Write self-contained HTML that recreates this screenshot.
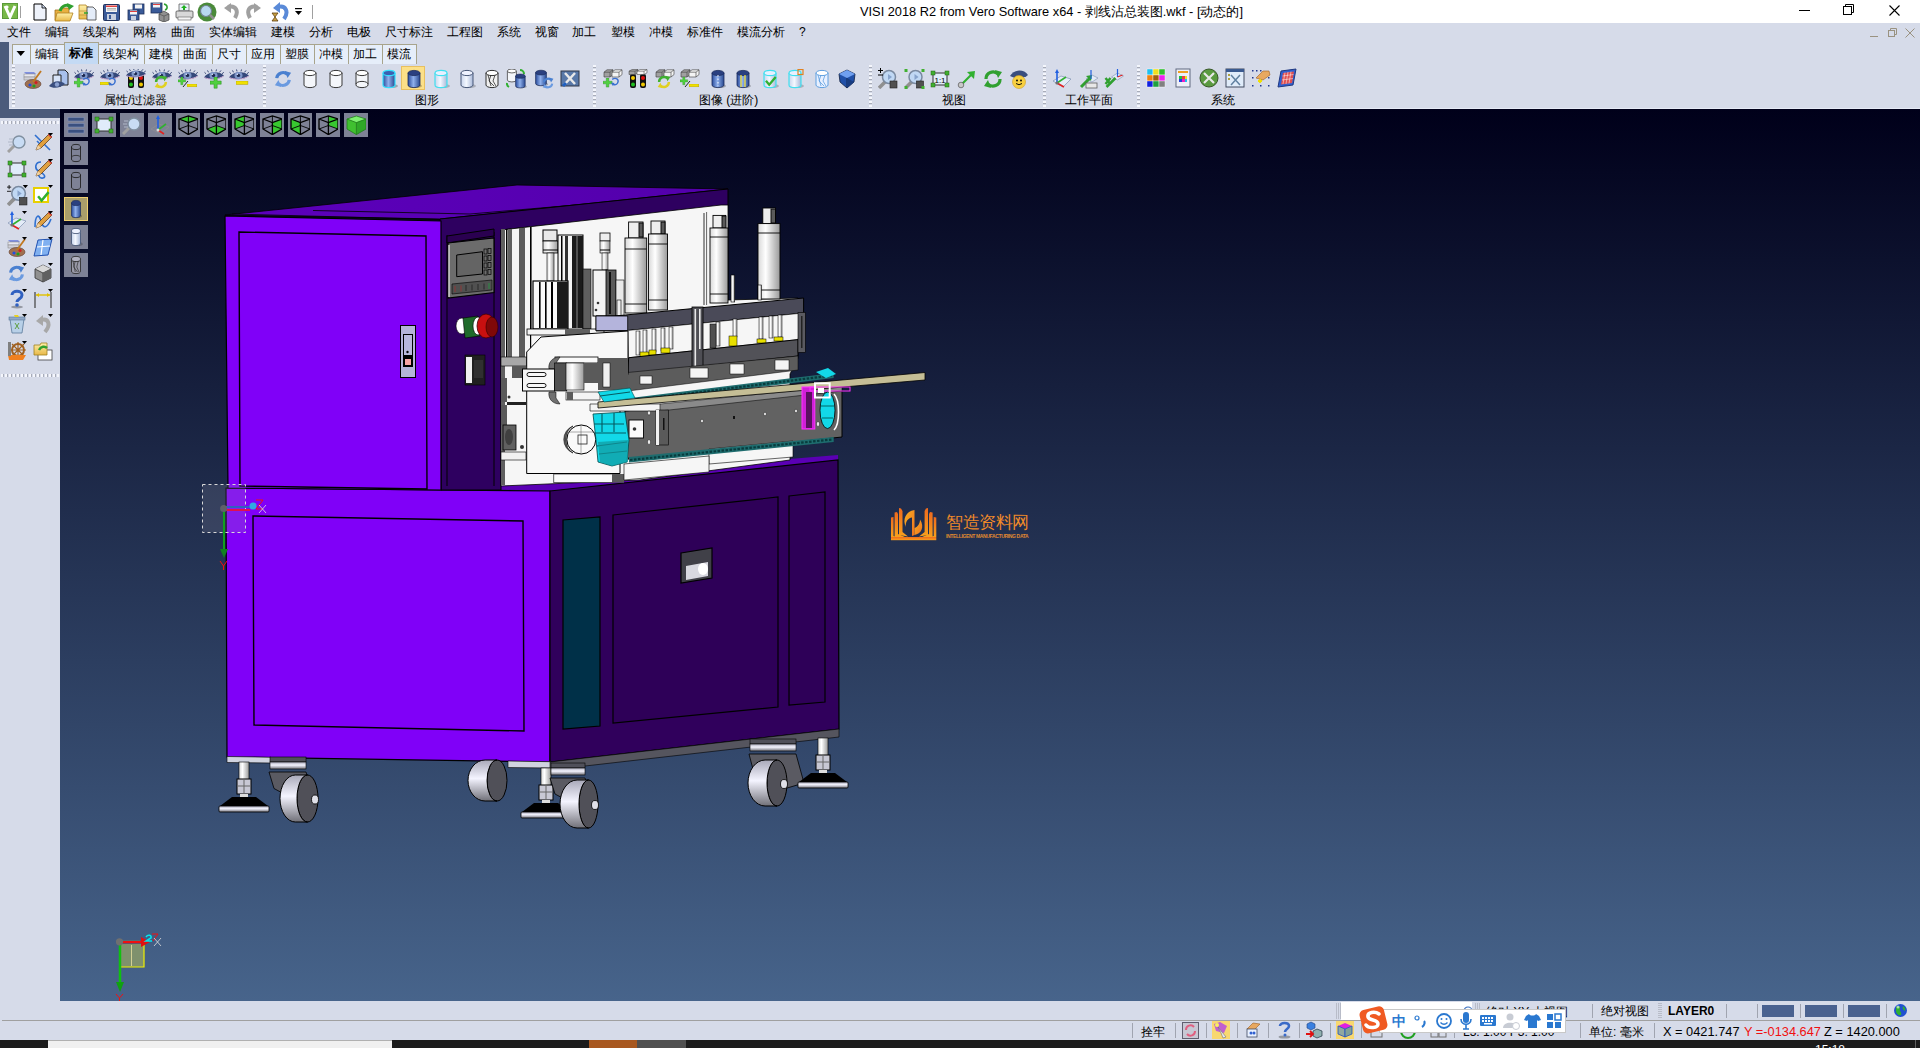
<!DOCTYPE html>
<html><head><meta charset="utf-8">
<style>
*{margin:0;padding:0;box-sizing:border-box}
html,body{width:1920px;height:1048px;overflow:hidden;background:#d6dbe9;font-family:"Liberation Sans",sans-serif;font-size:12px;color:#000}
.a{position:absolute}
.t{position:absolute;white-space:nowrap;line-height:14px}
#title{left:0;top:0;width:1920px;height:23px;background:#fff}
#vp{left:60px;top:109px;width:1860px;height:892px;background:linear-gradient(#00001a,#47648b)}
</style></head><body>
<div class="a" style="left:0;top:42px;width:9px;height:76px;background:#4b5b7b"></div>
<div class="a" style="left:0;top:109px;width:60px;height:9px;background:#4b5b7b"></div>
<div class="a" style="left:9px;top:108px;width:1911px;height:1px;background:#e6eaf6"></div>
<div id="vp" class="a"></div>
<div class="a" style="left:2px;top:1020px;width:1918px;height:1px;background:#a0a0a0"></div>
<div class="a" style="left:0;top:1040px;width:1920px;height:8px;background:#1c1c1c"></div>
<div class="a" style="left:48px;top:1040px;width:344px;height:8px;background:#f0f0f0;border-top:1px solid #b0b0b0"></div>
<div class="a" style="left:589px;top:1040px;width:48px;height:8px;background:#a85820"></div>
<div class="a" style="left:637px;top:1040px;width:49px;height:8px;background:#505050"></div>
<svg class="a" style="left:0;top:0" width="1920" height="1048" viewBox="0 0 1920 1048">
<defs>
<clipPath id="vpc"><rect x="60" y="109" width="1860" height="892"/></clipPath>
<linearGradient id="whl" x1="0" x2="0" y1="0" y2="1"><stop offset="0" stop-color="#a8a8b8"/><stop offset="0.45" stop-color="#f4f4ff"/><stop offset="1" stop-color="#707078"/></linearGradient>
<linearGradient id="cyl" x1="0" x2="1" y1="0" y2="0"><stop offset="0" stop-color="#d8d8d8"/><stop offset="0.35" stop-color="#ffffff"/><stop offset="1" stop-color="#9a9a9a"/></linearGradient>
<linearGradient id="topf" x1="0" x2="1" y1="0" y2="0"><stop offset="0" stop-color="#5c00bc"/><stop offset="0.5" stop-color="#5800b4"/><stop offset="1" stop-color="#5200aa"/></linearGradient>
<g id="foot">
 <rect x="-5" y="0" width="10" height="18" fill="url(#cyl)" stroke="#000" stroke-width="0.6"/>
 <rect x="-7" y="17" width="14" height="15" fill="#c8c8d4" stroke="#000" stroke-width="1"/>
 <line x1="0" y1="17" x2="0" y2="32" stroke="#666" stroke-width="1"/>
 <line x1="-7" y1="24" x2="7" y2="24" stroke="#666" stroke-width="1"/>
 <rect x="-4" y="32" width="8" height="3" fill="#ddd"/>
 <polygon points="-24,44 -12,35 12,35 24,44" fill="#000"/>
 <rect x="-25" y="44" width="50" height="6" rx="1" fill="url(#whl)" stroke="#000" stroke-width="0.8"/>
</g>

</defs>
<g clip-path="url(#vpc)">
<!-- lower cabinet -->
<polygon points="441,482 560,478 838,455 838,460 550,491 441,488" fill="#5a00b4"/>
<polygon points="226,488 550,491 550,762 227,757" fill="#8000f8" stroke="#000" stroke-width="1.2"/>
<polygon points="253,516 523,521 524,731 254,725" fill="#8000f8" stroke="#000" stroke-width="1.4"/>
<polygon points="550,491 838,460 839,729 550,762" fill="#30005c" stroke="#000" stroke-width="1.2"/>
<polygon points="563,520 600,517 600,726 563,729" fill="#003048" stroke="#000" stroke-width="1.2"/>
<polygon points="613,515 778,497 778,707 613,723" fill="#2e0058" stroke="#000" stroke-width="1.2"/>
<polygon points="789,496 825,492 825,702 789,705" fill="#2e0058" stroke="#000" stroke-width="1.2"/>
<polygon points="681,553 712,548 712,578 681,583" fill="#404048" stroke="#000" stroke-width="1.2"/>
<path d="M686,566 L708,562 L708,576 L686,580 Z" fill="#d8d8e0"/>
<ellipse cx="703" cy="569" rx="5" ry="6" fill="#fff"/>
<polygon points="227,756.5 271,757.2 271,763 227,762.5" fill="#d0d3e0" stroke="#000" stroke-width="0.6"/>
<polygon points="508,761 551,761.7 551,768 508,767.5" fill="#d0d3e0" stroke="#000" stroke-width="0.6"/>
<polygon points="550,762 839,729 839,737 550,770" fill="#55555e" stroke="#000" stroke-width="0.6"/>
<!-- upper cabinet -->
<polygon points="225,215 517,185 728,189 440,219" fill="url(#topf)" stroke="#000" stroke-width="0.8"/>
<path d="M232,214 L440,219.5 M313,210.5 L470,214 L728,192" stroke="#000" stroke-width="1" fill="none" opacity="0.8"/>
<polygon points="440,219 728,189 728,206 501,230 501,490 441,490" fill="#2e0060" stroke="#000" stroke-width="1"/>
<polygon points="225,216 441,221 441,490 228,488" fill="#8000f8" stroke="#000" stroke-width="1.2"/>
<polygon points="239,232 426,236 427,489 240,486" fill="#8000f8" stroke="#000" stroke-width="1.4"/>
<rect x="400.5" y="325.5" width="15" height="52" fill="#b4b4d8" stroke="#000" stroke-width="1"/>
<rect x="403.5" y="334.5" width="9" height="32" fill="#b8b8dc" stroke="#000" stroke-width="1"/>
<rect x="404" y="355" width="8" height="11" fill="#000"/>
<rect x="405" y="359" width="6" height="6" fill="#f8a4a4"/>
<circle cx="407.5" cy="352" r="1.2" fill="#000"/>
<!-- side panel details -->
<line x1="447" y1="235" x2="447" y2="486" stroke="#000" stroke-width="1"/>
<line x1="494" y1="232" x2="494" y2="486" stroke="#000" stroke-width="1"/>
<polygon points="447,236 494,229 494,236 447,243" fill="#2a0050" stroke="#000" stroke-width="1"/>
<polygon points="448,243 494,238 494,292.5 448,298" fill="#6c6c6c" stroke="#000" stroke-width="1.2"/>
<line x1="449" y1="245" x2="449" y2="297" stroke="#f0f0f0" stroke-width="1.2"/>
<polygon points="456.7,255 482.5,251.7 482.5,274 456.7,276.7" fill="#646464" stroke="#000" stroke-width="1"/>
<g fill="none" stroke="#000" stroke-width="0.7"><rect x="484" y="249" width="3" height="5"/><rect x="488" y="248.5" width="3" height="5"/><rect x="484" y="256" width="3" height="5"/><rect x="488" y="255.5" width="3" height="5"/><rect x="484" y="263" width="3" height="5"/><rect x="488" y="262.5" width="3" height="5"/><rect x="484" y="270" width="3" height="5"/><rect x="488" y="269.5" width="3" height="5"/></g>
<polygon points="452,284 492,280 492,290 452,294" fill="#505050" stroke="#000" stroke-width="0.6"/>
<g fill="none" stroke-width="0.8"><path d="M455,286 v6 M461,285.5 v6" stroke="#a03030"/><path d="M466,285 v6 M472,284.5 v6 M478,284 v6 M484,283.5 v6" stroke="#202020"/><path d="M489,283 v6" stroke="#20a040"/></g>
<ellipse cx="462" cy="326" rx="6" ry="8" fill="#fff" stroke="#000" stroke-width="0.6"/>
<polygon points="463,318 478,316 480,336 465,338" fill="#1e6a2a" stroke="#000" stroke-width="0.6"/>
<ellipse cx="478" cy="326" rx="5" ry="9" fill="#fff" stroke="#000" stroke-width="0.6"/>
<ellipse cx="486" cy="326" rx="9" ry="12" fill="#c81010" stroke="#400" stroke-width="0.8"/>
<ellipse cx="492" cy="327" rx="6" ry="10" fill="#800808" stroke="#300" stroke-width="0.6"/>
<rect x="465" y="355" width="20" height="30" fill="#202020" stroke="#000" stroke-width="0.6"/>
<rect x="466" y="357" width="6" height="26" fill="#f0f0f0"/>
<rect x="474" y="360" width="9" height="18" fill="#303030"/>

<!-- mechanism -->
<polygon points="501,230 721,205 728,205 728,300 798,298 798,358 790,374 790,460 640,480 501,486" fill="#f6f6f6" stroke="#000" stroke-width="0.8"/>
<polyline points="704,213 704,305" stroke="#000" stroke-width="0.8" fill="none"/>
<polyline points="706.6,212 706.6,305" stroke="#000" stroke-width="0.6" fill="none"/>
<polyline points="531,227 531,330" stroke="#000" stroke-width="1" fill="none"/>
<!-- vertical profile -->
<rect x="501" y="229" width="4" height="256" fill="#606060"/>
<rect x="506" y="229" width="1.5" height="128" fill="#000"/>
<rect x="508" y="229" width="4" height="128" fill="#606060"/>
<rect x="519" y="228" width="6" height="129" fill="#5c5c5c"/>
<rect x="530" y="227" width="1.2" height="130" fill="#000"/>
<rect x="501" y="357" width="26" height="9" fill="#a8a8a8" stroke="#000" stroke-width="0.6"/>
<rect x="512" y="366" width="14" height="12" fill="#5a5a5a"/>
<rect x="501" y="378" width="6" height="24" fill="#5a5a5a"/>
<rect x="507" y="402" width="19" height="3" fill="#222"/>
<rect x="501" y="405" width="6" height="20" fill="#5a5a5a"/>
<rect x="503" y="425" width="13" height="25" fill="#606060" stroke="#000" stroke-width="0.8"/>
<ellipse cx="509" cy="437" rx="4" ry="8" fill="#404040"/>
<rect x="501" y="452" width="25" height="8" fill="#f0f0f0" stroke="#000" stroke-width="0.6"/>
<circle cx="522" cy="447" r="2" fill="#333"/>
<circle cx="509" cy="397" r="1.5" fill="#333"/>
<!-- cylinder 1 small -->
<rect x="543" y="230" width="14" height="11" fill="#e8e8e8" stroke="#000" stroke-width="1"/>
<rect x="543" y="241" width="15" height="12" fill="url(#cyl)" stroke="#000" stroke-width="0.8"/>
<line x1="543" y1="250" x2="558" y2="250" stroke="#000" stroke-width="1"/>
<rect x="547" y="253" width="7" height="28" fill="url(#cyl)" stroke="#000" stroke-width="0.6"/>
<!-- striped column -->
<rect x="558" y="235" width="25" height="95" fill="#f4f4f4" stroke="#000" stroke-width="1"/>
<rect x="561" y="236" width="1.5" height="92" fill="#000"/>
<rect x="565" y="236" width="3" height="92" fill="#303030"/>
<rect x="572" y="236" width="11" height="92" fill="#1a1a1a"/>
<rect x="576" y="236" width="2" height="92" fill="#505050"/>
<rect x="583" y="269" width="8" height="60" fill="#5e5e5e" stroke="#000" stroke-width="0.6"/>
<rect x="533" y="281" width="35" height="48" fill="#fafafa" stroke="#000" stroke-width="1.2"/>
<rect x="539" y="282" width="1.6" height="46" fill="#000"/>
<rect x="545" y="282" width="1.6" height="46" fill="#000"/>
<rect x="551" y="282" width="2" height="46" fill="#000"/>
<rect x="557" y="282" width="11" height="46" fill="#1a1a1a"/>
<rect x="527" y="329" width="77" height="6" fill="#f4f4f4" stroke="#000" stroke-width="0.8"/>
<rect x="565" y="329" width="25" height="6" fill="#606060"/>
<!-- small cylinder 2 -->
<rect x="600" y="233" width="10" height="8" fill="#eee" stroke="#000" stroke-width="0.8"/>
<rect x="600" y="241" width="10" height="12" fill="url(#cyl)" stroke="#000" stroke-width="0.6"/>
<line x1="600" y1="250" x2="610" y2="250" stroke="#000" stroke-width="1"/>
<rect x="602" y="253" width="6" height="17" fill="url(#cyl)" stroke="#000" stroke-width="0.5"/>
<!-- block -->
<rect x="593" y="270" width="14" height="46" fill="#f4f4f4" stroke="#000" stroke-width="1"/>
<rect x="606" y="270" width="10" height="46" fill="#5a5a5a" stroke="#000" stroke-width="0.8"/>
<rect x="609" y="272" width="2" height="42" fill="#111"/>
<circle cx="598" cy="303" r="1.3" fill="#333"/><circle cx="596" cy="310" r="1.3" fill="#333"/>
<rect x="616" y="280" width="8" height="36" fill="#e8e8e8" stroke="#000" stroke-width="0.6"/>
<!-- big cylinders -->
<g stroke="#000" stroke-width="0.9">
<rect x="628.6" y="222" width="14.4" height="16" fill="#eeeeee"/><rect x="639" y="223" width="4" height="14" fill="#5a5a5a"/>
<rect x="625" y="238" width="21.7" height="75" fill="url(#cyl)"/>
<line x1="625" y1="249" x2="646.7" y2="249"/><line x1="625" y1="304" x2="646.7" y2="304"/>
<rect x="651" y="221" width="14" height="13" fill="#eeeeee"/><rect x="661" y="222" width="4" height="12" fill="#5a5a5a"/>
<rect x="648.5" y="234" width="19" height="76" fill="url(#cyl)"/>
<line x1="648.5" y1="244" x2="667.5" y2="244"/><line x1="648.5" y1="300" x2="667.5" y2="300"/>
<rect x="713" y="215.4" width="12.6" height="12.6" fill="#eeeeee"/><rect x="722" y="216" width="4" height="12" fill="#5a5a5a"/>
<rect x="710" y="228" width="18" height="75" fill="url(#cyl)"/>
<line x1="710" y1="237" x2="728" y2="237"/><line x1="710" y1="294" x2="728" y2="294"/>
<rect x="762.8" y="208" width="12.7" height="15.6" fill="#eeeeee"/><rect x="771" y="209" width="4.5" height="14" fill="#5a5a5a"/>
<rect x="758" y="223.6" width="22" height="75.4" fill="url(#cyl)"/>
<line x1="758" y1="233" x2="780" y2="233"/><line x1="758" y1="290" x2="780" y2="290"/>
<rect x="731" y="275" width="3.7" height="27" fill="url(#cyl)" stroke-width="0.6"/>
<rect x="758" y="285" width="3.5" height="15" fill="url(#cyl)" stroke-width="0.6"/>
<rect x="617" y="300" width="4" height="16" fill="#eee" stroke-width="0.6"/>
</g>
<!-- top beam -->
<polygon points="596,316 628,316 628,331 596,331" fill="#b4b4dc" stroke="#000" stroke-width="0.8"/>
<polygon points="615,316 803.6,298 803.6,313 627.7,330.5 615,330.5" fill="#4a4a58" stroke="#000" stroke-width="1"/>
<polygon points="596,316 627.7,316 627.7,330.5 596,330.5" fill="#b4b4dc" stroke="#000" stroke-width="0.8"/>
<!-- between beams -->
<polygon points="627.7,330.5 803.6,313 798,339.6 628.6,357.75" fill="#f6f6f6" stroke="#000" stroke-width="0.5"/>
<g fill="url(#cyl)" stroke="#000" stroke-width="0.5">
<rect x="636" y="331" width="4" height="24"/><rect x="643" y="330" width="4" height="24"/><rect x="652" y="329" width="4" height="23"/><rect x="661" y="328" width="4" height="23"/><rect x="669" y="327" width="4" height="22"/>
<rect x="716" y="322" width="4" height="24"/><rect x="733" y="319" width="4" height="18"/><rect x="759" y="317" width="4" height="22"/><rect x="769" y="316" width="4" height="22"/><rect x="778" y="315" width="4" height="22"/>
</g>
<rect x="710" y="324" width="6" height="24" fill="#505050" stroke="#000" stroke-width="0.5"/>
<g fill="#e8e000" stroke="#000" stroke-width="0.5">
<rect x="640" y="352" width="9" height="5"/><rect x="649" y="350" width="7" height="5"/><rect x="661" y="348" width="9" height="5"/>
<rect x="729" y="336" width="8" height="10"/><rect x="757" y="339" width="9" height="4"/><rect x="774" y="337" width="9" height="4"/>
</g>
<!-- lower beam -->
<polygon points="628.6,357.75 798,339.6 798,356 628,374" fill="#525258" stroke="#000" stroke-width="1"/>
<rect x="692" y="307" width="11" height="62.5" fill="#4e4e54" stroke="#000" stroke-width="0.8"/>
<rect x="694.5" y="309" width="1.6" height="58" fill="#e8e8e8"/><rect x="699" y="309" width="1.6" height="40" fill="#e8e8e8"/>
<rect x="798" y="312.4" width="7.4" height="40" fill="#5a5a60" stroke="#000" stroke-width="0.6"/>
<rect x="801" y="316" width="1.5" height="32" fill="#222"/>
<!-- below lower beam -->
<polygon points="612,374 798,356 798,370 620,392" fill="#5c5c5c" stroke="#000" stroke-width="0.5"/>
<g fill="#f4f4f4" stroke="#000" stroke-width="0.5"><rect x="690" y="368" width="18" height="10"/><rect x="730" y="364" width="14" height="10"/><rect x="775" y="360" width="14" height="10"/><rect x="640" y="376" width="12" height="8"/></g>
<!-- white bracket area -->
<polygon points="526.7,352 541,337 628,331 628,374 620,392 620,473.5 526.7,473.5" fill="#f8f8f8" stroke="#000" stroke-width="1"/>
<rect x="555" y="357" width="43" height="6" fill="#fafafa" stroke="#000" stroke-width="0.8"/>
<rect x="598" y="358" width="30" height="32" fill="#5a5a5a"/>
<rect x="603" y="363" width="7" height="24" fill="#f0f0f0" stroke="#000" stroke-width="0.5"/>
<path d="M560,357 C551,357 548,364 549,369 L556,369 L556,363 Z" fill="#707070" stroke="#000" stroke-width="0.5"/>
<path d="M560,404 C551,404 548,397 549,392 L556,392 L556,398 Z" fill="#707070" stroke="#000" stroke-width="0.5"/>
<rect x="522.5" y="369" width="32" height="22" fill="#f6f6f6" stroke="#000" stroke-width="1"/>
<rect x="527" y="372.5" width="19" height="4" rx="2" fill="none" stroke="#000" stroke-width="0.9"/>
<rect x="527" y="383.5" width="19" height="4" rx="2" fill="none" stroke="#000" stroke-width="0.9"/>
<rect x="554.5" y="363" width="12.3" height="28" fill="#505050" stroke="#000" stroke-width="0.6"/>
<rect x="566" y="363" width="18" height="27" fill="url(#cyl)" stroke="#000" stroke-width="0.6"/>
<rect x="584" y="363" width="14" height="20" fill="#5a5a5a"/>
<rect x="566" y="392" width="34" height="8" fill="#f4f4f4" stroke="#000" stroke-width="0.6"/>
<rect x="567" y="392" width="6" height="8" fill="#5a5a5a"/>
<circle cx="581.3" cy="439.5" r="14.5" fill="#fafafa" stroke="#000" stroke-width="1"/>
<path d="M573,426 A14.5,14.5 0 0 0 573,453 A11,14.5 0 0 1 573,426Z" fill="#606060" stroke="#000" stroke-width="0.6"/>
<path d="M581,425 V454 M568,432 L594,432" stroke="#555" stroke-width="0.5"/>
<rect x="578" y="435" width="9" height="9" fill="none" stroke="#222" stroke-width="0.8"/>
<rect x="553.8" y="474" width="58.7" height="8.7" fill="#fafafa" stroke="#000" stroke-width="0.6"/>
<rect x="612" y="474" width="12" height="8.7" fill="#5a5a5a"/>
<!-- conveyor -->
<polygon points="625,411 842,390.7 842,437 629,459.8 621,444" fill="#626262" stroke="#000" stroke-width="1"/>
<polygon points="709,449 793,441 793,457 709,464" fill="#f6f6f6" stroke="#000" stroke-width="0.6"/>
<polygon points="624,464 709,456 709,472 624,480" fill="#f6f6f6" stroke="#000" stroke-width="0.6"/>
<polygon points="590,404 660.4,404 660.4,411 590,411" fill="#f4f4f4" stroke="#000" stroke-width="0.6"/>
<polygon points="660,404 842,386 842,391 660,411" fill="#8a8a8a" stroke="#000" stroke-width="0.5"/>
<polygon points="634.7,397.5 833.7,373 833.7,378 634.7,402.5" fill="#1e6c6e"/>
<polyline points="636,400 832,375.5" stroke="#083c3e" stroke-width="2.2" stroke-dasharray="2.5,1.5" fill="none"/>
<polygon points="598,402 925,372.5 925,380 598,408" fill="#c5be96" stroke="#000" stroke-width="0.8"/>
<polygon points="629,457 833.7,437 833.7,442 629,462.5" fill="#1e6c6e"/>
<polyline points="630,460 832,439.5" stroke="#083c3e" stroke-width="2.2" stroke-dasharray="2.5,1.5" fill="none"/>
<rect x="629" y="420" width="14.5" height="18" fill="#fafafa" stroke="#000" stroke-width="0.9"/>
<circle cx="634.5" cy="429" r="1.8" fill="#333"/>
<rect x="656" y="410" width="12.5" height="35" fill="#5a5a5a" stroke="#000" stroke-width="0.6"/>
<rect x="656" y="410" width="3" height="35" fill="#f0f0f0"/>
<rect x="663" y="418" width="1.5" height="12" fill="#111"/>
<g fill="#f4f4f4" stroke="#000" stroke-width="0.4"><ellipse cx="649" cy="413" rx="1.5" ry="2"/><ellipse cx="649" cy="442" rx="1.5" ry="2.5"/><ellipse cx="702" cy="421" rx="1.3" ry="1.8"/><ellipse cx="765" cy="414" rx="1.3" ry="1.8"/><ellipse cx="796" cy="411" rx="1.3" ry="1.8"/><ellipse cx="818" cy="424" rx="1.5" ry="2.5"/></g>
<rect x="733" y="416" width="2" height="3" fill="#111"/>
<!-- cyan gear left -->
<polygon points="593,414 625,412 629,440 627,462 612,466 598,462 596,440" fill="#12d8e8" stroke="#044" stroke-width="0.8"/>
<g stroke="#055a60" stroke-width="1.1" fill="none"><path d="M594,424 H624 M594,433 H626 M597,446 L627,442 M599,454 L627,451 M602,414 V432 M614,413 V432"/></g>
<polygon points="598,442 628,440 628,462 612,466 600,462" fill="#119aa0" opacity="0.7"/>
<polygon points="598,392 630,388 635,398 604,402" fill="#12d8e8" stroke="#044" stroke-width="0.6"/>
<path d="M600,396 L630,392" stroke="#055a60" stroke-width="1"/>
<polygon points="816,372 828,368 836,374 826,378" fill="#12d8e8"/>
<!-- right end -->
<path d="M834,394 C840,400 840,424 834,430" stroke="#fff" stroke-width="1.6" fill="none"/>
<ellipse cx="827.5" cy="410.3" rx="7.5" ry="18.3" fill="#12d8e8" stroke="#000" stroke-width="0.8"/>
<path d="M821,406 H834 M822,418 H833" stroke="#066" stroke-width="1"/>
<rect x="802" y="387" width="12.8" height="42" fill="#d020d8" stroke="#ff30ff" stroke-width="1"/>
<rect x="806" y="392" width="6" height="36" fill="#5a1060"/>
<rect x="810" y="387" width="40" height="4" fill="none" stroke="#ff30ff" stroke-width="1"/>
<rect x="815" y="383.3" width="14.7" height="14.2" fill="none" stroke="#fff" stroke-width="2"/>
<rect x="818" y="388" width="6" height="5" fill="#fff"/>

<!-- feet & casters -->
<ellipse cx="497" cy="780.5" rx="10" ry="20.5" fill="#505058" stroke="#000" stroke-width="1"/><path d="M485.1,760.0 L497,760.0 A10,20.5 0 0 0 497,801.0 L485.1,801.0 A17.1,20.5 0 0 1 485.1,760.0 Z" fill="url(#whl)" stroke="#000" stroke-width="1"/>
<use href="#foot" x="546" y="768"/>
<use href="#foot" x="244" y="762"/>
<rect x="270" y="757" width="36" height="5" fill="#50505a" stroke="#000" stroke-width="0.6"/><rect x="270" y="762" width="36" height="7" fill="url(#whl)" stroke="#000" stroke-width="0.6"/><path d="M269,772 L306,772 L314,798.5 L307.5,806.5 L274,788.5 Z" fill="#5a5a62" stroke="#000" stroke-width="0.8"/><ellipse cx="307.5" cy="798.5" rx="10.5" ry="23.5" fill="#505058" stroke="#000" stroke-width="1"/><path d="M295.3,775.0 L307.5,775.0 A10.5,23.5 0 0 0 307.5,822.0 L295.3,822.0 A15.3,23.5 0 0 1 295.3,775.0 Z" fill="url(#whl)" stroke="#000" stroke-width="1"/><ellipse cx="315.0" cy="799.5" rx="3.5" ry="4.5" fill="#e0e0e8" stroke="#000" stroke-width="0.8"/>
<rect x="551" y="763" width="34" height="5" fill="#50505a" stroke="#000" stroke-width="0.6"/><rect x="551" y="768" width="34" height="7" fill="url(#whl)" stroke="#000" stroke-width="0.6"/><path d="M550,778 L585,778 L593,804 L588.5,812 L555,794 Z" fill="#5a5a62" stroke="#000" stroke-width="0.8"/><ellipse cx="588.5" cy="804" rx="9.5" ry="24" fill="#505058" stroke="#000" stroke-width="1"/><path d="M577.1,780 L588.5,780 A9.5,24 0 0 0 588.5,828 L577.1,828 A17.1,24 0 0 1 577.1,780 Z" fill="url(#whl)" stroke="#000" stroke-width="1"/><ellipse cx="595.0" cy="805" rx="3.5" ry="4.5" fill="#e0e0e8" stroke="#000" stroke-width="0.8"/>
<rect x="750" y="739" width="46" height="5" fill="#50505a" stroke="#000" stroke-width="0.6"/><rect x="750" y="744" width="46" height="7" fill="url(#whl)" stroke="#000" stroke-width="0.6"/><path d="M749,754 L796,754 L804,783 L777,791 L754,773 Z" fill="#5a5a62" stroke="#000" stroke-width="0.8"/><ellipse cx="777" cy="783" rx="10" ry="23" fill="#505058" stroke="#000" stroke-width="1"/><path d="M765.1,760 L777,760 A10,23 0 0 0 777,806 L765.1,806 A17.1,23 0 0 1 765.1,760 Z" fill="url(#whl)" stroke="#000" stroke-width="1"/><ellipse cx="784" cy="784" rx="3.5" ry="4.5" fill="#e0e0e8" stroke="#000" stroke-width="0.8"/>
<use href="#foot" x="823" y="738"/>
</g>
</svg>

<svg width="0" height="0" style="position:absolute">
<defs>
<linearGradient id="gb" x1="0" x2="1"><stop offset="0" stop-color="#2a4c9c"/><stop offset="0.45" stop-color="#8fb0ec"/><stop offset="1" stop-color="#284890"/></linearGradient>
<linearGradient id="gl" x1="0" x2="1"><stop offset="0" stop-color="#c8d4ec"/><stop offset="0.45" stop-color="#f4f8ff"/><stop offset="1" stop-color="#a8b8d8"/></linearGradient>
<linearGradient id="gw" x1="0" x2="1"><stop offset="0" stop-color="#e4e4e4"/><stop offset="0.5" stop-color="#ffffff"/><stop offset="1" stop-color="#cfcfcf"/></linearGradient>
<linearGradient id="gg" x1="0" x2="0" y1="0" y2="1"><stop offset="0" stop-color="#9be070"/><stop offset="1" stop-color="#2c9a1c"/></linearGradient>
<linearGradient id="gy" x1="0" x2="0" y1="0" y2="1"><stop offset="0" stop-color="#fff060"/><stop offset="1" stop-color="#d0a800"/></linearGradient>
<linearGradient id="gfold" x1="0" x2="0" y1="0" y2="1"><stop offset="0" stop-color="#fff0a8"/><stop offset="1" stop-color="#e8b848"/></linearGradient>
<symbol id="eye" viewBox="0 0 20 20"><path d="M0,9 C3,3 15,1 20,7 C16,11 5,12 0,9Z" fill="#34487a"/><path d="M0.5,9 C5,11.5 15,11 19.5,7.5" stroke="#d0a8d0" stroke-width="1" fill="none"/><ellipse cx="9.5" cy="6.8" rx="4" ry="3.6" fill="#7e96c8"/><circle cx="9.5" cy="6.8" r="1.7" fill="#1c2850"/><circle cx="8.3" cy="5.6" r="0.8" fill="#e0e8ff"/><path d="M2,5 L0.5,3.5 M4.5,3.5 L3.5,1.5 M8,2.5 L7.5,0.5 M12,2.5 L12.5,0.5 M15.5,3.5 L17,1.5 M18,5 L19.8,3.5" stroke="#283868" stroke-width="0.9"/></symbol>
<symbol id="plus" viewBox="0 0 20 20"><path d="M5,0 H9 V5 H14 V9 H9 V14 H5 V9 H0 V5 H5Z" fill="#50d040" stroke="#2a8a20" stroke-width="0.6"/></symbol>
<symbol id="minus" viewBox="0 0 20 20"><rect x="0" y="0" width="14" height="4" fill="#f0e000" stroke="#b0a000" stroke-width="0.6"/></symbol>
<symbol id="barrow" viewBox="0 0 20 20"><path d="M2,4 C8,0 14,4 11,10 C9,14 4,13 3,12" stroke="#3a70d0" stroke-width="2.4" fill="none"/><path d="M0,9 L6,10 L3,15Z" fill="#3a70d0"/></symbol>
<symbol id="cylo" viewBox="0 0 20 20"><path d="M4,4 V16 A6,2.6 0 0 0 16,16 V4" fill="#f4f6fa" stroke="#383838" stroke-width="1"/><ellipse cx="10" cy="4" rx="6" ry="2.6" fill="#ffffff" stroke="#383838" stroke-width="1"/></symbol>
<symbol id="cylo2" viewBox="0 0 20 20"><path d="M4,4 V16 A6,2.6 0 0 0 16,16 V4" fill="#f4f6fa" stroke="#383838" stroke-width="1"/><ellipse cx="10" cy="4" rx="6" ry="2.6" fill="#ffffff" stroke="#383838" stroke-width="1"/><path d="M4,15 A6,2.6 0 0 1 16,15" stroke="#383838" fill="none"/></symbol>
<symbol id="cylb" viewBox="0 0 20 20"><ellipse cx="11" cy="17" rx="7" ry="2" fill="#000" opacity="0.25"/><path d="M4,4 V16 A6,2.6 0 0 0 16,16 V4" fill="url(#gb)" stroke="#1c2c5c" stroke-width="0.8"/><ellipse cx="10" cy="4" rx="6" ry="2.6" fill="#2a4080" stroke="#1c2c5c" stroke-width="0.8"/></symbol>
<symbol id="cylbc" viewBox="0 0 20 20"><ellipse cx="12" cy="17" rx="7" ry="2" fill="#000" opacity="0.25"/><path d="M4,4 V16 A6,2.6 0 0 0 16,16 V4" fill="url(#gb)" stroke="#30e0ff" stroke-width="1.2"/><ellipse cx="10" cy="4" rx="6" ry="2.6" fill="#3a60b0" stroke="#30e0ff" stroke-width="1.2"/></symbol>
<symbol id="cylc" viewBox="0 0 20 20"><ellipse cx="12" cy="17" rx="7" ry="2" fill="#000" opacity="0.2"/><path d="M4,4 V16 A6,2.6 0 0 0 16,16 V4" fill="url(#gl)" stroke="#40e0f0" stroke-width="1.2"/><ellipse cx="10" cy="4" rx="6" ry="2.6" fill="#e8f0ff" stroke="#40e0f0" stroke-width="1.2"/></symbol>
<symbol id="cyll" viewBox="0 0 20 20"><ellipse cx="12" cy="17" rx="7" ry="2" fill="#000" opacity="0.2"/><path d="M4,4 V16 A6,2.6 0 0 0 16,16 V4" fill="url(#gl)" stroke="#485878" stroke-width="1"/><ellipse cx="10" cy="4" rx="6" ry="2.6" fill="#eef2ff" stroke="#485878" stroke-width="1"/></symbol>
<symbol id="cylw" viewBox="0 0 20 20"><path d="M4,4 V16 A6,2.6 0 0 0 16,16 V4" fill="#f0f0f0" stroke="#303030" stroke-width="1"/><ellipse cx="10" cy="4" rx="6" ry="2.6" fill="#fff" stroke="#303030" stroke-width="1"/><path d="M6,6 L9,17 M9,6 L7,12 L12,17 M13,6 L11,12 L14,17" stroke="#303030" stroke-width="0.8" fill="none"/></symbol>
<symbol id="cylwb" viewBox="0 0 20 20"><path d="M4,4 V16 A6,2.6 0 0 0 16,16 V4" fill="#e8f0ff" stroke="#60a0e0" stroke-width="1"/><ellipse cx="10" cy="4" rx="6" ry="2.6" fill="#fff" stroke="#60a0e0" stroke-width="1"/><path d="M6,6 L9,17 M9,6 L7,12 L12,17 M13,6 L11,12 L14,17" stroke="#60a0e0" stroke-width="0.8" fill="none"/></symbol>
<symbol id="refb" viewBox="0 0 20 20"><path d="M3,9 A7,7 0 0 1 15,5" stroke="#4a80d0" stroke-width="3.5" fill="none"/><path d="M12,1 L19,3 L15,9Z" fill="#4a80d0"/><path d="M17,11 A7,7 0 0 1 5,15" stroke="#6a9ae0" stroke-width="3.5" fill="none"/><path d="M8,19 L1,17 L5,11Z" fill="#6a9ae0"/></symbol>
<symbol id="refg" viewBox="0 0 20 20"><path d="M3,10 A7,7 0 0 1 15,5" stroke="#40b030" stroke-width="3.5" fill="none"/><path d="M12,1 L19,3 L15,9Z" fill="#40b030"/><path d="M17,10 A7,7 0 0 1 5,15" stroke="#e0d020" stroke-width="3.5" fill="none"/><path d="M8,19 L1,17 L5,11Z" fill="#e0d020"/></symbol>
<symbol id="refgg" viewBox="0 0 20 20"><path d="M3,10 A7,7 0 0 1 15,5" stroke="#30a030" stroke-width="3.2" fill="none"/><path d="M12,1 L19,3 L15,9Z" fill="#30a030"/><path d="M17,10 A7,7 0 0 1 5,15" stroke="#30a030" stroke-width="3.2" fill="none"/><path d="M8,19 L1,17 L5,11Z" fill="#30a030"/></symbol>
<symbol id="traffic" viewBox="0 0 20 20"><rect x="2" y="5" width="6" height="14" rx="2" fill="#111"/><rect x="12" y="5" width="6" height="14" rx="2" fill="#111"/><circle cx="5" cy="9" r="2" fill="#f0c800"/><circle cx="5" cy="15.5" r="2" fill="#20c020"/><circle cx="15" cy="9" r="2" fill="#e01010"/><circle cx="15" cy="15.5" r="2" fill="#f0c800"/></symbol>
<symbol id="cubes" viewBox="0 0 20 20"><path d="M1,4 L4,1 L10,1 L10,7 L7,10 L1,10Z" fill="#a0a0a0" stroke="#404040" stroke-width="0.7"/><path d="M1,4 H7 V10 M7,4 L10,1" stroke="#404040" stroke-width="0.7" fill="none"/><path d="M9,4 L12,1 L19,1 L19,7 L16,10 L9,10Z" fill="#f4f4f4" stroke="#404040" stroke-width="0.7"/><path d="M9,4 H16 V10 M16,4 L19,1" stroke="#404040" stroke-width="0.7" fill="none"/></symbol>
<symbol id="palette" viewBox="0 0 20 20"><path d="M1,3 L11,3 L13,5 L3,5Z" fill="#8090e0"/><rect x="1" y="5" width="11" height="3" fill="#e8e8f0" stroke="#808080" stroke-width="0.5"/><rect x="1" y="8" width="11" height="3" fill="#d0d0d8" stroke="#808080" stroke-width="0.5"/><ellipse cx="10" cy="15" rx="8" ry="4.5" fill="#a07050" stroke="#604030" stroke-width="0.6"/><circle cx="7" cy="16" r="1.6" fill="#2050e0"/><circle cx="11" cy="17" r="1.6" fill="#20a020"/><circle cx="13" cy="13.5" r="1.6" fill="#d02020"/><path d="M10,13 L18,2" stroke="#c07820" stroke-width="1.8"/></symbol>
<symbol id="docseye" viewBox="0 0 20 20"><path d="M9,1 H16 L19,4 V16 H9Z" fill="#a8c0ec" stroke="#202020" stroke-width="1"/><path d="M4,6 H12 V17 H4Z" fill="#d8e4f8" stroke="#202020" stroke-width="1"/><path d="M0,17 C4,11 12,11 16,15 C12,19 4,20 0,17Z" fill="#3a4e7e"/><circle cx="8" cy="15.5" r="2.2" fill="#8aa0d0"/></symbol>
<symbol id="tool" viewBox="0 0 20 20"><rect x="1" y="2" width="18" height="15" fill="#5878a8" stroke="#303848" stroke-width="1"/><path d="M4,16 L15,4 M5,4 L15,15" stroke="#e8e8e8" stroke-width="2.5"/><path d="M3,17 L6,14" stroke="#2060c0" stroke-width="3"/></symbol>
<symbol id="cube" viewBox="0 0 20 20"><path d="M2,5 L10,1 L18,5 L17,13 L10,19 L3,13Z" fill="#2050a8" stroke="#102040" stroke-width="0.8"/><path d="M2,5 L10,9 L18,5 L10,1Z" fill="#70a0f0"/><path d="M10,9 V19" stroke="#102040" stroke-width="0.8"/><path d="M10,9 L17,13 L10,19Z" fill="#183c80"/></symbol>
<symbol id="zoom" viewBox="0 0 20 20"><path d="M1,19 L8,12" stroke="#909090" stroke-width="3.5"/><circle cx="11" cy="8" r="6.5" fill="#c0d8f4" stroke="#7a8aa0" stroke-width="1.5"/><path d="M10,5 L14,8 L10,11Z" fill="#6080b0" opacity="0.6"/><rect x="12" y="12" width="7" height="7" fill="#505050" stroke="#202020" stroke-width="0.6"/></symbol>
<symbol id="frame" viewBox="0 0 20 20"><rect x="3" y="4" width="14" height="12" fill="#e0ecfa" stroke="#303030" stroke-width="1"/><g fill="#40b030" stroke="#206010" stroke-width="0.5"><rect x="1" y="2" width="4" height="4"/><rect x="15" y="2" width="4" height="4"/><rect x="1" y="14" width="4" height="4"/><rect x="15" y="14" width="4" height="4"/></g></symbol>
<symbol id="smile" viewBox="0 0 20 20"><path d="M1,7 C5,0 15,0 19,6 C15,10 6,10 1,7Z" fill="#3a4e7e"/><circle cx="10" cy="13" r="6.5" fill="#f8d040" stroke="#d0a020" stroke-width="0.6"/><circle cx="8" cy="11.5" r="0.9" fill="#000"/><circle cx="12" cy="11.5" r="0.9" fill="#000"/><path d="M7,14.5 Q10,17 13,14.5" stroke="#000" stroke-width="0.9" fill="none"/></symbol>
<symbol id="arrowg" viewBox="0 0 20 20"><path d="M4,16 L16,4" stroke="#30b030" stroke-width="2.2"/><path d="M10,3 L18,2 L17,10Z" fill="#30b030"/><circle cx="4" cy="16" r="2.8" fill="#c8c8c8" stroke="#404040" stroke-width="0.6"/></symbol>
<symbol id="wplane" viewBox="0 0 20 20"><path d="M1,12 L9,7 L19,10 L11,18Z" fill="#e4ecf8" stroke="#8090b0" stroke-width="0.7"/><path d="M5,14 V2" stroke="#2060e0" stroke-width="1.6"/><path d="M3,4 L5,0 L7,4Z" fill="#2060e0"/><path d="M5,14 L14,8" stroke="#30b030" stroke-width="1.6"/><path d="M5,14 L12,18" stroke="#e02020" stroke-width="1.6"/><circle cx="5" cy="14" r="1.6" fill="#707070"/></symbol>
<symbol id="grid" viewBox="0 0 20 20"><g stroke="#fff" stroke-width="0.4"><rect x="1" y="1" width="6" height="6" fill="#20c0f0"/><rect x="7" y="1" width="6" height="6" fill="#f0e020"/><rect x="13" y="1" width="6" height="6" fill="#30c030"/><rect x="1" y="7" width="6" height="6" fill="#f08010"/><rect x="7" y="7" width="6" height="6" fill="#a06010"/><rect x="13" y="7" width="6" height="6" fill="#f020f0"/><rect x="1" y="13" width="6" height="6" fill="#1020e0"/><rect x="7" y="13" width="6" height="6" fill="#20a040"/><rect x="13" y="13" width="6" height="6" fill="#808080"/></g></symbol>
<symbol id="docc" viewBox="0 0 20 20"><rect x="3" y="1" width="14" height="18" fill="#eef0f8" stroke="#606a80" stroke-width="1"/><rect x="5" y="3" width="10" height="2" fill="#f0a020"/><g><rect x="6" y="8" width="3" height="3" fill="#20c040"/><rect x="9" y="8" width="3" height="3" fill="#f04040"/><rect x="12" y="8" width="2" height="3" fill="#f0e020"/><rect x="6" y="11" width="3" height="3" fill="#2040e0"/><rect x="9" y="11" width="3" height="3" fill="#f020c0"/><rect x="12" y="11" width="2" height="3" fill="#20c0f0"/></g></symbol>
<symbol id="wrench" viewBox="0 0 20 20"><circle cx="10" cy="10" r="9" fill="#5a9a40" stroke="#385828" stroke-width="1"/><path d="M5,15 L15,5 M5,5 L15,15" stroke="#e8e8e8" stroke-width="2.2"/></symbol>
<symbol id="wintool" viewBox="0 0 20 20"><rect x="1" y="1" width="18" height="18" fill="#e0ecfa" stroke="#404a60" stroke-width="1"/><rect x="1" y="1" width="18" height="3" fill="#3a5a90"/><path d="M6,17 L15,7 M6,7 L15,17" stroke="#6080a0" stroke-width="1.5"/><g fill="#b0a040"><rect x="3" y="6" width="2" height="2"/><rect x="3" y="10" width="2" height="2"/></g></symbol>
<symbol id="hand" viewBox="0 0 20 20"><g fill="#203890"><rect x="1" y="2" width="1.5" height="1.5"/><rect x="5" y="2" width="1.5" height="1.5"/><rect x="9" y="2" width="1.5" height="1.5"/><rect x="1" y="9" width="1.5" height="1.5"/><rect x="1" y="17" width="1.5" height="1.5"/><rect x="9" y="17" width="1.5" height="1.5"/><rect x="17" y="17" width="1.5" height="1.5"/><rect x="17" y="9" width="1.5" height="1.5"/></g><path d="M5,10 L12,3 L18,3 L19,7 L12,12Z" fill="#e8a860" stroke="#a06020" stroke-width="0.6"/><path d="M7,13 H11 M9,11 V15" stroke="#f0e000" stroke-width="1.8"/></symbol>
<symbol id="bgrid" viewBox="0 0 20 20"><path d="M4,3 L19,1 L16,17 L1,19Z" fill="#3060d0" stroke="#203880" stroke-width="1"/><path d="M6,5 L17,3.5 L15,15 L4,16.5Z" fill="#e05050"/><path d="M8,4.5 L6,16 M11,4 L9,16 M14,3.5 L12,15.5 M5.5,8 L16.5,6.5 M5,12 L16,10.5" stroke="#fff" stroke-width="0.5"/></symbol>
<symbol id="check" viewBox="0 0 20 20"><path d="M3,9 L8,15 L18,3" stroke="#30b030" stroke-width="3.5" fill="none"/></symbol>
<symbol id="pencil" viewBox="0 0 20 20"><path d="M3,17 L5,12 L16,1 L19,4 L8,15Z" fill="#e0a040" stroke="#503010" stroke-width="0.7"/><path d="M16,1 L19,4 L18,5 L15,2Z" fill="#e04040"/><path d="M3,17 L5,12 L8,15Z" fill="#f0d0a0"/></symbol>
</defs></svg>
<div class="a" style="left:0;top:0;width:1920px;height:23px;background:#fff"></div>
<div class="a" style="left:2px;top:3px;width:16px;height:16px;background:#78b848;border:1px solid #5a9a38"></div>
<svg class="a" style="left:2px;top:3px" width="16" height="16"><path d="M3,3 L8,14 L13,3" stroke="#fff" stroke-width="3" fill="none"/><circle cx="5" cy="4" r="1.6" fill="#fff"/></svg>
<div class="a" style="left:20px;top:6px;width:1px;height:12px;background:#a0a0a0"></div>
<svg class="a" style="left:32px;top:3px" width="16" height="18"><path d="M2,1 H10 L14,5 V17 H2Z" fill="#eef2fa" stroke="#000" stroke-width="1"/><path d="M10,1 V5 H14" fill="#c8d4ea" stroke="#000" stroke-width="0.8"/></svg>
<svg class="a" style="left:54px;top:2px" width="20" height="20"><path d="M1,8 H7 L8,6 H15 V18 H1Z" fill="#e8b040" stroke="#a07020" stroke-width="0.8"/><path d="M3,11 H19 L16,19 H1Z" fill="url(#gfold)" stroke="#b08020" stroke-width="0.8"/><path d="M6,9 C8,3 13,2 16,5" stroke="#30a030" stroke-width="3" fill="none"/><path d="M13,1 L20,4 L15,8Z" fill="#30a030"/></svg>
<svg class="a" style="left:78px;top:3px" width="20" height="18"><path d="M1,2 H8 L9,4 H11 V16 H1Z" fill="url(#gfold)" stroke="#b08020" stroke-width="0.8"/><path d="M1,8 H11 M1,12 H11" stroke="#b08020" stroke-width="0.6"/><path d="M9,4 H15 L18,7 V17 H9Z" fill="#e4ecf8" stroke="#404040" stroke-width="0.8"/><path d="M6,10 L10,10" stroke="#30a030" stroke-width="1.5"/></svg>
<svg class="a" style="left:103px;top:4px" width="17" height="17"><rect x="0.5" y="0.5" width="16" height="16" rx="1" fill="#3a5a98" stroke="#20305a"/><rect x="3" y="1" width="11" height="7" fill="#f4f4f4"/><rect x="3" y="1.5" width="11" height="1.5" fill="#e04040"/><path d="M4,4.5 H13 M4,6 H13" stroke="#888" stroke-width="0.6"/><rect x="4" y="10" width="9" height="6" fill="#c8d0e0"/><rect x="6" y="11" width="2" height="4" fill="#3a5a98"/></svg>
<svg class="a" style="left:127px;top:3px" width="18" height="18"><rect x="6" y="1" width="11" height="10" fill="#3a5a98" stroke="#20305a" stroke-width="0.8"/><rect x="8" y="1.5" width="7" height="4" fill="#f4f4f4"/><rect x="1" y="7" width="11" height="10" fill="#3a5a98" stroke="#20305a" stroke-width="0.8"/><rect x="3" y="7.5" width="7" height="4" fill="#f4f4f4"/><rect x="3" y="8" width="7" height="1" fill="#e04040"/><rect x="4" y="13" width="5" height="4" fill="#c8d0e0"/></svg>
<svg class="a" style="left:150px;top:2px" width="20" height="20"><rect x="1" y="1" width="11" height="10" fill="#3a5a98" stroke="#20305a" stroke-width="0.8"/><rect x="3" y="1.5" width="7" height="4" fill="#f4f4f4"/><rect x="3" y="2" width="7" height="1" fill="#e04040"/><path d="M9,12 L14,9 L19,12 L19,18 L14,20 L9,18Z" fill="#909090" stroke="#404040" stroke-width="0.7"/><path d="M9,12 L14,14 L19,12 M14,14 V20" stroke="#505050" stroke-width="0.7" fill="none"/><path d="M14,2 C18,3 18,7 15,8" stroke="#30a030" stroke-width="1.5" fill="none"/></svg>
<svg class="a" style="left:175px;top:3px" width="19" height="18"><path d="M4,1 H14 V8 H4Z" fill="#e8f0f8" stroke="#606060" stroke-width="0.8"/><path d="M9,2 L12,5 H10 V7 H8 V5 H6Z" fill="#20b020"/><rect x="1" y="8" width="17" height="7" rx="1" fill="#d8d8d8" stroke="#505050" stroke-width="0.8"/><rect x="3" y="14" width="13" height="3" fill="#f4f4f4" stroke="#606060" stroke-width="0.6"/></svg>
<svg class="a" style="left:197px;top:2px" width="20" height="20"><circle cx="10" cy="10" r="9.5" fill="#4a8a3a"/><circle cx="9" cy="9" r="5.5" fill="#b8d8f0" stroke="#708090" stroke-width="1.2"/><path d="M13,13 L17,17" stroke="#909090" stroke-width="2.5"/></svg>
<svg class="a" style="left:223px;top:3px" width="17" height="18"><path d="M5,4 C13,2 16,8 12,15" stroke="#a0a0a0" stroke-width="4" fill="none"/><path d="M1,5 L8,0 L8,10Z" fill="#a0a0a0"/></svg>
<svg class="a" style="left:245px;top:3px" width="17" height="18"><path d="M12,4 C4,2 1,8 5,15" stroke="#a0a0a0" stroke-width="4" fill="none"/><path d="M16,5 L9,0 L9,10Z" fill="#a0a0a0"/></svg>
<svg class="a" style="left:269px;top:2px" width="20" height="20"><path d="M9,5 C17,3 20,10 15,17" stroke="#5a8ad8" stroke-width="4" fill="none"/><path d="M4,6 L11,0 L11,11Z" fill="#5a8ad8"/><path d="M3,11 H9 L6,15 L9,19 H3 L6,15Z" fill="#c8a040" stroke="#604010" stroke-width="0.8"/></svg>
<svg class="a" style="left:294px;top:8px" width="9" height="8"><rect x="1" y="0" width="7" height="1.2" fill="#000"/><path d="M1,3 H8 L4.5,7Z" fill="#000"/></svg>
<div class="a" style="left:312px;top:5px;width:1px;height:14px;background:#a0a0a0"></div>
<div class="t" style="left:860px;top:5px;font-size:12.8px;color:#000;">VISI 2018 R2 from Vero Software x64 - 剥线沾总装图.wkf - [动态的]</div>
<div class="a" style="left:1799px;top:10px;width:11px;height:1px;background:#000"></div>
<svg class="a" style="left:1843px;top:4px" width="12" height="12"><rect x="0.5" y="2.5" width="8" height="8" fill="none" stroke="#000"/><path d="M2.5,2.5 V0.5 H10.5 V8.5 H8.5" fill="none" stroke="#000"/></svg>
<svg class="a" style="left:1889px;top:5px" width="12" height="12"><path d="M0.5,0.5 L10.5,10.5 M10.5,0.5 L0.5,10.5" stroke="#000" stroke-width="1.1"/></svg>
<div class="t" style="left:7px;top:25px;font-size:12px;color:#000;">文件</div>
<div class="t" style="left:45px;top:25px;font-size:12px;color:#000;">编辑</div>
<div class="t" style="left:83px;top:25px;font-size:12px;color:#000;">线架构</div>
<div class="t" style="left:133px;top:25px;font-size:12px;color:#000;">网格</div>
<div class="t" style="left:171px;top:25px;font-size:12px;color:#000;">曲面</div>
<div class="t" style="left:209px;top:25px;font-size:12px;color:#000;">实体编辑</div>
<div class="t" style="left:271px;top:25px;font-size:12px;color:#000;">建模</div>
<div class="t" style="left:309px;top:25px;font-size:12px;color:#000;">分析</div>
<div class="t" style="left:347px;top:25px;font-size:12px;color:#000;">电极</div>
<div class="t" style="left:385px;top:25px;font-size:12px;color:#000;">尺寸标注</div>
<div class="t" style="left:447px;top:25px;font-size:12px;color:#000;">工程图</div>
<div class="t" style="left:497px;top:25px;font-size:12px;color:#000;">系统</div>
<div class="t" style="left:535px;top:25px;font-size:12px;color:#000;">视窗</div>
<div class="t" style="left:572px;top:25px;font-size:12px;color:#000;">加工</div>
<div class="t" style="left:611px;top:25px;font-size:12px;color:#000;">塑模</div>
<div class="t" style="left:649px;top:25px;font-size:12px;color:#000;">冲模</div>
<div class="t" style="left:687px;top:25px;font-size:12px;color:#000;">标准件</div>
<div class="t" style="left:737px;top:25px;font-size:12px;color:#000;">模流分析</div>
<div class="t" style="left:799px;top:25px;font-size:12px;color:#000;">?</div>
<svg class="a" style="left:1868px;top:26px" width="50" height="14"><path d="M2,10.5 H10" stroke="#9a9280" stroke-width="1"/><rect x="20.5" y="4.5" width="6" height="6" fill="none" stroke="#9a9280"/><path d="M22.5,4.5 V2.5 H28.5 V8.5 H26.5" fill="none" stroke="#9a9280"/><path d="M37.5,2.5 L46.5,11.5 M46.5,2.5 L37.5,11.5" stroke="#9a9280"/></svg>
<div class="a" style="left:12px;top:44px;width:19px;height:20px;background:#e6eefa;border:1px solid #a8a48c;border-bottom:none"></div>
<div class="a" style="left:30px;top:44px;width:35px;height:20px;background:#e6eefa;border:1px solid #a8a48c;border-bottom:none"></div>
<div class="t" style="left:30px;top:47px;width:34px;text-align:center;font-size:12px;">编辑</div>
<div class="a" style="left:64px;top:42px;width:35px;height:22px;background:#c4daf4;border:1px solid #a8a48c;border-bottom:none"></div>
<div class="t" style="left:64px;top:46px;width:34px;text-align:center;font-size:12px;font-weight:bold;">标准</div>
<div class="a" style="left:98px;top:44px;width:47px;height:20px;background:#e6eefa;border:1px solid #a8a48c;border-bottom:none"></div>
<div class="t" style="left:98px;top:47px;width:46px;text-align:center;font-size:12px;">线架构</div>
<div class="a" style="left:144px;top:44px;width:35px;height:20px;background:#e6eefa;border:1px solid #a8a48c;border-bottom:none"></div>
<div class="t" style="left:144px;top:47px;width:34px;text-align:center;font-size:12px;">建模</div>
<div class="a" style="left:178px;top:44px;width:35px;height:20px;background:#e6eefa;border:1px solid #a8a48c;border-bottom:none"></div>
<div class="t" style="left:178px;top:47px;width:34px;text-align:center;font-size:12px;">曲面</div>
<div class="a" style="left:212px;top:44px;width:35px;height:20px;background:#e6eefa;border:1px solid #a8a48c;border-bottom:none"></div>
<div class="t" style="left:212px;top:47px;width:34px;text-align:center;font-size:12px;">尺寸</div>
<div class="a" style="left:246px;top:44px;width:35px;height:20px;background:#e6eefa;border:1px solid #a8a48c;border-bottom:none"></div>
<div class="t" style="left:246px;top:47px;width:34px;text-align:center;font-size:12px;">应用</div>
<div class="a" style="left:280px;top:44px;width:35px;height:20px;background:#e6eefa;border:1px solid #a8a48c;border-bottom:none"></div>
<div class="t" style="left:280px;top:47px;width:34px;text-align:center;font-size:12px;">塑膜</div>
<div class="a" style="left:314px;top:44px;width:35px;height:20px;background:#e6eefa;border:1px solid #a8a48c;border-bottom:none"></div>
<div class="t" style="left:314px;top:47px;width:34px;text-align:center;font-size:12px;">冲模</div>
<div class="a" style="left:348px;top:44px;width:35px;height:20px;background:#e6eefa;border:1px solid #a8a48c;border-bottom:none"></div>
<div class="t" style="left:348px;top:47px;width:34px;text-align:center;font-size:12px;">加工</div>
<div class="a" style="left:382px;top:44px;width:35px;height:20px;background:#e6eefa;border:1px solid #a8a48c;border-bottom:none"></div>
<div class="t" style="left:382px;top:47px;width:34px;text-align:center;font-size:12px;">模流</div>
<svg class="a" style="left:16px;top:50px" width="10" height="8"><path d="M0.5,1 H9 L4.75,6Z" fill="#000"/></svg>
<div class="a" style="left:12px;top:65px;width:3px;height:42px;background:repeating-linear-gradient(#f4f6fc 0 2px,#a8acb8 2px 3px,#d6dbe9 3px 4px)"></div>
<div class="a" style="left:263px;top:65px;width:3px;height:42px;background:repeating-linear-gradient(#f4f6fc 0 2px,#a8acb8 2px 3px,#d6dbe9 3px 4px)"></div>
<div class="a" style="left:593px;top:65px;width:3px;height:42px;background:repeating-linear-gradient(#f4f6fc 0 2px,#a8acb8 2px 3px,#d6dbe9 3px 4px)"></div>
<div class="a" style="left:869px;top:65px;width:3px;height:42px;background:repeating-linear-gradient(#f4f6fc 0 2px,#a8acb8 2px 3px,#d6dbe9 3px 4px)"></div>
<div class="a" style="left:1043px;top:65px;width:3px;height:42px;background:repeating-linear-gradient(#f4f6fc 0 2px,#a8acb8 2px 3px,#d6dbe9 3px 4px)"></div>
<div class="a" style="left:1137px;top:65px;width:3px;height:42px;background:repeating-linear-gradient(#f4f6fc 0 2px,#a8acb8 2px 3px,#d6dbe9 3px 4px)"></div>
<svg class="a" style="left:23px;top:69px" width="20" height="20" viewBox="0 0 20 20"><use href="#palette"/></svg>
<svg class="a" style="left:49px;top:69px" width="20" height="20" viewBox="0 0 20 20"><use href="#docseye"/></svg>
<svg class="a" style="left:74px;top:69px" width="20" height="20" viewBox="0 0 20 20"><g transform="translate(0,0) scale(1,0.95)"><use href="#eye"/></g><g transform="translate(0,9) scale(0.65)"><use href="#plus"/></g><g transform="translate(8,8) scale(0.6)"><use href="#barrow"/></g></svg>
<svg class="a" style="left:100px;top:69px" width="20" height="20" viewBox="0 0 20 20"><g transform="translate(0,0) scale(1,0.95)"><use href="#eye"/></g><g transform="translate(0,13) scale(0.7)"><use href="#minus"/></g><g transform="translate(8,8) scale(0.6)"><use href="#barrow"/></g></svg>
<svg class="a" style="left:126px;top:69px" width="20" height="20" viewBox="0 0 20 20"><use href="#traffic"/><g transform="translate(0,-1) scale(1,0.85)"><use href="#eye"/></g></svg>
<svg class="a" style="left:152px;top:69px" width="20" height="20" viewBox="0 0 20 20"><g transform="translate(0,0) scale(1,0.95)"><use href="#eye"/></g><g transform="translate(2,6) scale(0.7)"><use href="#refg"/></g></svg>
<svg class="a" style="left:178px;top:69px" width="20" height="20" viewBox="0 0 20 20"><g transform="translate(0,0) scale(1,0.95)"><use href="#eye"/></g><g transform="translate(0,8) scale(0.55)"><use href="#plus"/></g><path d="M5,18 L10,12" stroke="#222" stroke-width="1"/><g transform="translate(9,15) scale(0.7)"><use href="#minus"/></g></svg>
<svg class="a" style="left:204px;top:69px" width="20" height="20" viewBox="0 0 20 20"><g transform="translate(0,0) scale(1,0.95)"><use href="#eye"/></g><g transform="translate(6,8) scale(0.8)"><use href="#plus"/></g></svg>
<svg class="a" style="left:229px;top:69px" width="20" height="20" viewBox="0 0 20 20"><g transform="translate(0,0) scale(1,0.95)"><use href="#eye"/></g><g transform="translate(7,12) scale(0.85)"><use href="#minus"/></g></svg>
<div class="t" style="left:104px;top:93px;font-size:12px;color:#000;">属性/过滤器</div>
<svg class="a" style="left:274px;top:70px" width="18" height="18" viewBox="0 0 20 20"><use href="#refb"/></svg>
<svg class="a" style="left:300px;top:69px" width="20" height="20" viewBox="0 0 20 20"><use href="#cylo"/></svg>
<svg class="a" style="left:326px;top:69px" width="20" height="20" viewBox="0 0 20 20"><use href="#cylo"/></svg>
<svg class="a" style="left:352px;top:69px" width="20" height="20" viewBox="0 0 20 20"><use href="#cylo2"/></svg>
<svg class="a" style="left:379px;top:69px" width="20" height="20" viewBox="0 0 20 20"><use href="#cylbc"/></svg>
<div class="a" style="left:401px;top:66px;width:24px;height:24px;background:#fce088;border:1px solid #e8c060"></div>
<svg class="a" style="left:404px;top:69px" width="20" height="20" viewBox="0 0 20 20"><use href="#cylb"/></svg>
<svg class="a" style="left:431px;top:69px" width="20" height="20" viewBox="0 0 20 20"><use href="#cylc"/></svg>
<svg class="a" style="left:457px;top:69px" width="20" height="20" viewBox="0 0 20 20"><use href="#cyll"/></svg>
<svg class="a" style="left:482px;top:69px" width="20" height="20" viewBox="0 0 20 20"><use href="#cylw"/></svg>
<svg class="a" style="left:506px;top:69px" width="21" height="20" viewBox="0 0 21 20"><g transform="translate(-2,-1) scale(0.75)"><use href="#cylo"/></g><g transform="translate(6,4) scale(0.8)"><use href="#cylb"/></g><path d="M14,1 A4,4 0 0 1 18,5" stroke="#30b030" stroke-width="2" fill="none"/><path d="M3,18 A4,4 0 0 1 1,14" stroke="#30b030" stroke-width="2" fill="none"/></svg>
<svg class="a" style="left:534px;top:69px" width="20" height="20" viewBox="0 0 20 20"><g transform="translate(-2,0) scale(0.9)"><use href="#cylb"/></g><g transform="translate(8,8) scale(0.6)"><use href="#refb"/></g></svg>
<svg class="a" style="left:560px;top:69px" width="20" height="20" viewBox="0 0 20 20"><use href="#tool"/></svg>
<div class="t" style="left:415px;top:93px;font-size:12px;color:#000;">图形</div>
<svg class="a" style="left:603px;top:69px" width="20" height="20" viewBox="0 0 20 20"><g transform="translate(0,0) scale(1,0.8)"><use href="#cubes"/></g><g transform="translate(0,9) scale(0.65)"><use href="#plus"/></g><g transform="translate(8,8) scale(0.6)"><use href="#barrow"/></g></svg>
<svg class="a" style="left:628px;top:69px" width="20" height="20" viewBox="0 0 20 20"><use href="#traffic"/><g transform="translate(0,0) scale(1,0.55)"><use href="#cubes"/></g></svg>
<svg class="a" style="left:655px;top:69px" width="20" height="20" viewBox="0 0 20 20"><g transform="translate(0,0) scale(1,0.8)"><use href="#cubes"/></g><g transform="translate(2,6) scale(0.7)"><use href="#refg"/></g></svg>
<svg class="a" style="left:680px;top:69px" width="20" height="20" viewBox="0 0 20 20"><g transform="translate(0,0) scale(1,0.8)"><use href="#cubes"/></g><g transform="translate(0,8) scale(0.55)"><use href="#plus"/></g><path d="M5,18 L10,12" stroke="#222" stroke-width="1"/><g transform="translate(9,15) scale(0.7)"><use href="#minus"/></g></svg>
<svg class="a" style="left:708px;top:69px" width="20" height="20" viewBox="0 0 20 20"><use href="#cylb"/><path d="M10,6 V17" stroke="#fff" stroke-width="1" stroke-dasharray="1.5,2"/></svg>
<svg class="a" style="left:733px;top:69px" width="20" height="20" viewBox="0 0 20 20"><use href="#cylb"/><path d="M8,6 V18 M12,6 V18" stroke="#f0e040" stroke-width="1.3"/></svg>
<svg class="a" style="left:760px;top:69px" width="20" height="20" viewBox="0 0 20 20"><use href="#cylc"/><g transform="translate(4,6) scale(0.65)"><use href="#check"/></g></svg>
<svg class="a" style="left:785px;top:69px" width="20" height="20" viewBox="0 0 20 20"><use href="#cylc"/><rect x="13" y="0.5" width="5" height="5" fill="none" stroke="#e08020" stroke-width="1.2"/></svg>
<svg class="a" style="left:812px;top:69px" width="20" height="20" viewBox="0 0 20 20"><use href="#cylwb"/></svg>
<svg class="a" style="left:837px;top:69px" width="20" height="20" viewBox="0 0 20 20"><use href="#cube"/></svg>
<div class="t" style="left:699px;top:93px;font-size:12px;color:#000;">图像 (进阶)</div>
<svg class="a" style="left:878px;top:69px" width="20" height="20" viewBox="0 0 20 20"><use href="#zoom"/></svg>
<svg class="a" style="left:877px;top:68px" width="8" height="8"><path d="M1,2.5 H6 M3.5,0 V5 M1,7 H6" stroke="#000" stroke-width="1"/></svg>
<svg class="a" style="left:904px;top:69px" width="21" height="20" viewBox="0 0 20 20"><use href="#zoom"/><g fill="#40b030"><rect x="0" y="0" width="3" height="3"/><rect x="17" y="0" width="3" height="3"/><rect x="0" y="17" width="3" height="3"/><rect x="17" y="17" width="3" height="3"/></g></svg>
<svg class="a" style="left:930px;top:69px" width="20" height="20" viewBox="0 0 20 20"><use href="#frame"/><text x="10" y="13.5" font-size="8" text-anchor="middle" font-family="Liberation Sans" fill="#000">1:1</text></svg>
<svg class="a" style="left:957px;top:69px" width="20" height="20" viewBox="0 0 20 20"><use href="#arrowg"/></svg>
<svg class="a" style="left:983px;top:69px" width="20" height="20" viewBox="0 0 20 20"><use href="#refgg"/></svg>
<svg class="a" style="left:1009px;top:69px" width="20" height="20" viewBox="0 0 20 20"><use href="#smile"/></svg>
<div class="t" style="left:942px;top:93px;font-size:12px;color:#000;">视图</div>
<svg class="a" style="left:1051px;top:69px" width="22" height="20" viewBox="0 0 20 20"><use href="#wplane"/></svg>
<svg class="a" style="left:1078px;top:69px" width="20" height="20" viewBox="0 0 20 20"><path d="M8,10 L14,6 L20,9 L14,13Z" fill="#e4ecf8" stroke="#8090b0" stroke-width="0.6"/><path d="M3,18 L12,9" stroke="#30a030" stroke-width="3"/><path d="M8,7 L14,6 L13,12Z" fill="#30a030"/><rect x="8" y="14" width="11" height="5" fill="#e8e8e8" stroke="#606060" stroke-width="0.8"/><path d="M13,10 V1" stroke="#2060e0" stroke-width="1.2"/></svg>
<svg class="a" style="left:1103px;top:69px" width="21" height="20" viewBox="0 0 20 20"><path d="M8,8 L14,4 L20,7 L14,11Z" fill="#e4ecf8" stroke="#8090b0" stroke-width="0.6"/><path d="M2,9 L7,15 M7,9 L2,15" stroke="#30a030" stroke-width="2.5"/><path d="M3,18 L12,9" stroke="#30a030" stroke-width="2.5"/><path d="M14,8 V0" stroke="#2060e0" stroke-width="1.2"/><path d="M14,8 L19,6" stroke="#e02020" stroke-width="1.2"/></svg>
<div class="t" style="left:1065px;top:93px;font-size:12px;color:#000;">工作平面</div>
<svg class="a" style="left:1146px;top:68px" width="20" height="20" viewBox="0 0 20 20"><use href="#grid"/></svg>
<svg class="a" style="left:1173px;top:68px" width="20" height="20" viewBox="0 0 20 20"><use href="#docc"/></svg>
<svg class="a" style="left:1199px;top:68px" width="20" height="20" viewBox="0 0 20 20"><use href="#wrench"/></svg>
<svg class="a" style="left:1225px;top:68px" width="20" height="20" viewBox="0 0 20 20"><use href="#wintool"/></svg>
<svg class="a" style="left:1251px;top:68px" width="20" height="20" viewBox="0 0 20 20"><use href="#hand"/></svg>
<svg class="a" style="left:1277px;top:68px" width="20" height="20" viewBox="0 0 20 20"><use href="#bgrid"/></svg>
<div class="t" style="left:1211px;top:93px;font-size:12px;color:#000;">系统</div>
<div class="a" style="left:1px;top:121px;width:58px;height:3px;background:repeating-linear-gradient(90deg,#f4f6fc 0 2px,#a8acb8 2px 3px,#d6dbe9 3px 4px)"></div>
<div class="a" style="left:1px;top:374px;width:58px;height:3px;background:repeating-linear-gradient(90deg,#f4f6fc 0 2px,#a8acb8 2px 3px,#d6dbe9 3px 4px)"></div>
<svg class="a" style="left:7px;top:133px" width="20" height="20" viewBox="0 0 20 20"><path d="M1,19 L7,13" stroke="#a0a0a0" stroke-width="3"/><circle cx="12" cy="9" r="6" fill="#c8dcf4" stroke="#8090a0" stroke-width="1.4"/><path d="M2,6 H6 M1,9 H5 M2,12 H6" stroke="#b0b8c8" stroke-width="1"/></svg>
<svg class="a" style="left:33px;top:133px" width="20" height="20" viewBox="0 0 20 20"><path d="M2,2 L17,17 M4,8 L8,12" stroke="#3070d0" stroke-width="1.6"/><use href="#pencil"/><path d="M15,0 H20 L17.5,3Z" fill="#000"/></svg>
<svg class="a" style="left:7px;top:159px" width="20" height="20" viewBox="0 0 20 20"><use href="#frame"/></svg>
<svg class="a" style="left:33px;top:159px" width="20" height="20" viewBox="0 0 20 20"><path d="M8,3 C2,3 1,10 6,12 C10,14 14,18 10,19 C6,20 4,15 8,12" stroke="#3070d0" stroke-width="1.6" fill="none"/><use href="#pencil"/><path d="M15,0 H20 L17.5,3Z" fill="#000"/></svg>
<svg class="a" style="left:7px;top:185px" width="21" height="21" viewBox="0 0 20 20"><use href="#zoom"/><path d="M0,2 H4 M2,0 V4 M0,6 H4" stroke="#000" stroke-width="0.8"/><path d="M15,0 H20 L17.5,3Z" fill="#000"/></svg>
<svg class="a" style="left:33px;top:185px" width="20" height="20" viewBox="0 0 20 20"><rect x="1" y="3" width="14" height="14" fill="#fff" stroke="#e8d000" stroke-width="2"/><g transform="translate(3,5) scale(0.7)"><use href="#check"/></g><path d="M15,0 H20 L17.5,3Z" fill="#000"/></svg>
<svg class="a" style="left:7px;top:211px" width="20" height="20" viewBox="0 0 20 20"><use href="#wplane"/><path d="M15,0 H20 L17.5,3Z" fill="#000"/></svg>
<svg class="a" style="left:33px;top:211px" width="20" height="20" viewBox="0 0 20 20"><path d="M2,16 C2,4 6,2 8,10 C10,18 14,18 18,8" stroke="#3070d0" stroke-width="1.6" fill="none"/><use href="#pencil"/><path d="M15,0 H20 L17.5,3Z" fill="#000"/></svg>
<svg class="a" style="left:7px;top:237px" width="20" height="20" viewBox="0 0 20 20"><use href="#palette"/><path d="M15,0 H20 L17.5,3Z" fill="#000"/></svg>
<svg class="a" style="left:33px;top:237px" width="20" height="20" viewBox="0 0 20 20"><path d="M5,3 L19,2 L15,18 L1,19Z" fill="#80b0f0" stroke="#2050b0" stroke-width="1"/><path d="M10,3 L8,18 M4,10 L17,9" stroke="#fff" stroke-width="1.2"/><path d="M15,0 H20 L17.5,3Z" fill="#000"/></svg>
<svg class="a" style="left:7px;top:263px" width="20" height="20" viewBox="0 0 20 20"><g transform="translate(1,2) scale(0.85)"><use href="#refb"/></g><path d="M15,0 H20 L17.5,3Z" fill="#000"/></svg>
<svg class="a" style="left:33px;top:263px" width="20" height="20" viewBox="0 0 20 20"><path d="M2,6 L10,2 L18,6 L18,15 L10,19 L2,15Z" fill="#909090" stroke="#303030" stroke-width="0.8"/><path d="M2,6 L10,10 L18,6 L10,2Z" fill="#d8d8d8"/><path d="M10,10 V19 M2,6 L10,10 L18,6" stroke="#303030" stroke-width="0.8" fill="none"/><path d="M10,10 L18,6 L18,15 L10,19Z" fill="#606060"/><path d="M15,0 H20 L17.5,3Z" fill="#000"/></svg>
<svg class="a" style="left:7px;top:289px" width="20" height="20" viewBox="0 0 20 20"><ellipse cx="10" cy="18" rx="6" ry="1.5" fill="#000" opacity="0.3"/><path d="M5,6 C5,1 15,1 15,6 C15,10 10,10 10,13" stroke="#3060c0" stroke-width="3" fill="none"/><circle cx="10" cy="16" r="1.8" fill="#3060c0"/><path d="M15,0 H20 L17.5,3Z" fill="#000"/></svg>
<svg class="a" style="left:33px;top:289px" width="20" height="20" viewBox="0 0 20 20"><path d="M2,3 V19 M18,3 V19" stroke="#404040" stroke-width="1.2"/><path d="M3,6 H17" stroke="#e0c000" stroke-width="1.4"/><path d="M3,6 L6,4 V8Z M17,6 L14,4 V8Z" fill="#e0c000"/><path d="M15,0 H20 L17.5,3Z" fill="#000"/></svg>
<svg class="a" style="left:7px;top:314px" width="20" height="20" viewBox="0 0 20 20"><path d="M3,5 H17 L15,19 H5Z" fill="#b8d0e8" stroke="#5a7a9a" stroke-width="0.8"/><rect x="2" y="3" width="16" height="3" fill="#90a8c8" stroke="#5a7a9a" stroke-width="0.6"/><path d="M7,1 L11,1 L12,3 L8,3Z" fill="#e8d020"/><path d="M8,9 L12,15 M12,9 L8,15" stroke="#60a040" stroke-width="1"/><path d="M15,0 H20 L17.5,3Z" fill="#000"/></svg>
<svg class="a" style="left:33px;top:314px" width="20" height="20" viewBox="0 0 20 20"><path d="M8,6 C16,4 18,11 12,18" stroke="#a8a8a8" stroke-width="4" fill="none"/><path d="M3,7 L10,1 L10,12Z" fill="#a8a8a8"/><path d="M15,0 H20 L17.5,3Z" fill="#000"/></svg>
<svg class="a" style="left:7px;top:341px" width="20" height="20" viewBox="0 0 20 20"><circle cx="11" cy="9" r="6" fill="none" stroke="#a06020" stroke-width="2"/><path d="M11,1 V17 M3,9 H19 M5,3 L17,15 M17,3 L5,15" stroke="#a06020" stroke-width="1.2"/><path d="M1,14 L19,14 L16,19 L2,19Z" fill="#f08020"/><rect x="1" y="1" width="3" height="14" fill="#808080"/><path d="M15,0 H20 L17.5,3Z" fill="#000"/></svg>
<svg class="a" style="left:33px;top:341px" width="20" height="20" viewBox="0 0 20 20"><rect x="5" y="9" width="14" height="10" fill="#fff" stroke="#404040" stroke-width="0.8"/><path d="M1,4 H7 L8,2 H14 V14 H1Z" fill="url(#gfold)" stroke="#a08020" stroke-width="0.8"/><path d="M6,9 C8,5 12,5 14,7" stroke="#30a030" stroke-width="2.5" fill="none"/></svg>
<div class="a" style="left:64px;top:113px;width:24px;height:24px;background:#7e8296"></div>
<svg class="a" style="left:66px;top:115px" width="20" height="20" viewBox="0 0 20 20"><g fill="#3a5080" stroke="#8090b8" stroke-width="0.6"><rect x="2" y="2.5" width="16" height="3.5"/><rect x="2" y="8.5" width="16" height="3.5"/><rect x="2" y="14.5" width="16" height="3.5"/></g></svg>
<div class="a" style="left:92px;top:113px;width:24px;height:24px;background:#7e8296"></div>
<svg class="a" style="left:94px;top:115px" width="20" height="20" viewBox="0 0 20 20"><use href="#frame"/></svg>
<div class="a" style="left:120px;top:113px;width:24px;height:24px;background:#7e8296"></div>
<svg class="a" style="left:122px;top:115px" width="20" height="20" viewBox="0 0 20 20"><path d="M1,19 L7,13" stroke="#a0a0a0" stroke-width="3"/><circle cx="12" cy="9" r="6" fill="#c8dcf4" stroke="#8090a0" stroke-width="1.4"/><path d="M2,6 H6 M1,9 H5 M2,12 H6" stroke="#b0b8c8" stroke-width="1"/></svg>
<div class="a" style="left:148px;top:113px;width:24px;height:24px;background:#7e8296"></div>
<svg class="a" style="left:150px;top:115px" width="20" height="20" viewBox="0 0 20 20"><path d="M1,14 L9,9 L19,12 L11,19Z" fill="none" stroke="#909090" stroke-width="0.7"/><path d="M8,15 V2" stroke="#2060e0" stroke-width="1.6"/><path d="M6,4 L8,0 L10,4Z" fill="#2060e0"/><path d="M8,15 L16,9" stroke="#30b030" stroke-width="1.6"/><path d="M8,15 L14,19" stroke="#e02020" stroke-width="1.6"/><circle cx="8" cy="15" r="1.5" fill="#ddd"/></svg>
<div class="a" style="left:176px;top:113px;width:24px;height:24px;background:#7e8296"></div>
<svg class="a" style="left:178px;top:115px" width="20" height="20" viewBox="0 0 20 20"><path d="M1,4 L10.4,1 L20,4 L10.4,7.6Z" fill="#38c830"/><path d="M1,4 L10.4,1 L20,4 L20,14 L10.4,19.6 L1,14Z M1,4 L10.4,7.6 L20,4 M10.4,7.6 V19.6" fill="none" stroke="#000" stroke-width="1.3"/><path d="M10.4,1 V10.5 M1,14 L10.4,10.5 L20,14" fill="none" stroke="#000" stroke-width="0.9"/></svg>
<div class="a" style="left:204px;top:113px;width:24px;height:24px;background:#7e8296"></div>
<svg class="a" style="left:206px;top:115px" width="20" height="20" viewBox="0 0 20 20"><path d="M1,14 L10.4,10.5 L20,14 L10.4,19.6Z" fill="#38c830"/><path d="M1,4 L10.4,1 L20,4 L20,14 L10.4,19.6 L1,14Z M1,4 L10.4,7.6 L20,4 M10.4,7.6 V19.6" fill="none" stroke="#000" stroke-width="1.3"/><path d="M10.4,1 V10.5 M1,14 L10.4,10.5 L20,14" fill="none" stroke="#000" stroke-width="0.9"/></svg>
<div class="a" style="left:232px;top:113px;width:24px;height:24px;background:#7e8296"></div>
<svg class="a" style="left:234px;top:115px" width="20" height="20" viewBox="0 0 20 20"><path d="M1,4 L10.4,1 L10.4,10.5 L1,14Z" fill="#38c830"/><path d="M1,4 L10.4,1 L20,4 L20,14 L10.4,19.6 L1,14Z M1,4 L10.4,7.6 L20,4 M10.4,7.6 V19.6" fill="none" stroke="#000" stroke-width="1.3"/><path d="M10.4,1 V10.5 M1,14 L10.4,10.5 L20,14" fill="none" stroke="#000" stroke-width="0.9"/></svg>
<div class="a" style="left:260px;top:113px;width:24px;height:24px;background:#7e8296"></div>
<svg class="a" style="left:262px;top:115px" width="20" height="20" viewBox="0 0 20 20"><path d="M10.4,7.6 L20,4 L20,14 L10.4,19.6Z" fill="#38c830"/><path d="M1,4 L10.4,1 L20,4 L20,14 L10.4,19.6 L1,14Z M1,4 L10.4,7.6 L20,4 M10.4,7.6 V19.6" fill="none" stroke="#000" stroke-width="1.3"/><path d="M10.4,1 V10.5 M1,14 L10.4,10.5 L20,14" fill="none" stroke="#000" stroke-width="0.9"/></svg>
<div class="a" style="left:288px;top:113px;width:24px;height:24px;background:#7e8296"></div>
<svg class="a" style="left:290px;top:115px" width="20" height="20" viewBox="0 0 20 20"><path d="M1,4 L10.4,7.6 L10.4,19.6 L1,14Z" fill="#38c830"/><path d="M1,4 L10.4,1 L20,4 L20,14 L10.4,19.6 L1,14Z M1,4 L10.4,7.6 L20,4 M10.4,7.6 V19.6" fill="none" stroke="#000" stroke-width="1.3"/><path d="M10.4,1 V10.5 M1,14 L10.4,10.5 L20,14" fill="none" stroke="#000" stroke-width="0.9"/></svg>
<div class="a" style="left:316px;top:113px;width:24px;height:24px;background:#7e8296"></div>
<svg class="a" style="left:318px;top:115px" width="20" height="20" viewBox="0 0 20 20"><path d="M10.4,1 L20,4 L20,14 L10.4,10.5Z" fill="#38c830"/><path d="M1,4 L10.4,1 L20,4 L20,14 L10.4,19.6 L1,14Z M1,4 L10.4,7.6 L20,4 M10.4,7.6 V19.6" fill="none" stroke="#000" stroke-width="1.3"/><path d="M10.4,1 V10.5 M1,14 L10.4,10.5 L20,14" fill="none" stroke="#000" stroke-width="0.9"/></svg>
<div class="a" style="left:344px;top:113px;width:24px;height:24px;background:#7e8296"></div>
<svg class="a" style="left:346px;top:115px" width="20" height="20" viewBox="0 0 20 20"><path d="M1,4 L10.4,1 L20,4 L10.4,7.6Z" fill="#7ef070"/><path d="M1,4 L10.4,7.6 L10.4,19.6 L1,14Z" fill="#40c030"/><path d="M10.4,7.6 L20,4 L20,14 L10.4,19.6Z" fill="#30a828"/><path d="M1,4 L10.4,1 L20,4 L20,14 L10.4,19.6 L1,14Z M1,4 L10.4,7.6 L20,4 M10.4,7.6 V19.6" fill="none" stroke="#208018" stroke-width="0.8"/></svg>
<div class="a" style="left:64px;top:141px;width:24px;height:24px;background:#7e8296"></div>
<svg class="a" style="left:66px;top:143px" width="20" height="20" viewBox="0 0 20 20"><g transform="translate(2.5,0) scale(0.75,1)"><path d="M4,4 V16 A6,2.6 0 0 0 16,16 V4" fill="none" stroke="#202020" stroke-width="1"/><ellipse cx="10" cy="4" rx="6" ry="2.6" fill="none" stroke="#202020" stroke-width="1"/><path d="M4,15 A6,2.6 0 0 1 16,15" stroke="#303030" fill="none"/></g></svg>
<div class="a" style="left:64px;top:169px;width:24px;height:24px;background:#7e8296"></div>
<svg class="a" style="left:66px;top:171px" width="20" height="20" viewBox="0 0 20 20"><g transform="translate(2.5,0) scale(0.75,1)"><path d="M4,4 V16 A6,2.6 0 0 0 16,16 V4" fill="none" stroke="#202020" stroke-width="1"/><ellipse cx="10" cy="4" rx="6" ry="2.6" fill="none" stroke="#202020" stroke-width="1"/></g></svg>
<div class="a" style="left:64px;top:197px;width:24px;height:24px;background:#aa9e6a;border:1px solid #f0d070"></div>
<svg class="a" style="left:66px;top:199px" width="20" height="20" viewBox="0 0 20 20"><g transform="translate(2.5,0) scale(0.75,1)"><use href="#cylb"/></g></svg>
<div class="a" style="left:64px;top:225px;width:24px;height:24px;background:#7e8296"></div>
<svg class="a" style="left:66px;top:227px" width="20" height="20" viewBox="0 0 20 20"><g transform="translate(2.5,0) scale(0.75,1)"><use href="#cyll"/></g></svg>
<div class="a" style="left:64px;top:253px;width:24px;height:24px;background:#7e8296"></div>
<svg class="a" style="left:66px;top:255px" width="20" height="20" viewBox="0 0 20 20"><g transform="translate(2.5,0) scale(0.75,1)"><path d="M4,4 V16 A6,2.6 0 0 0 16,16 V4" fill="#9a9aa8" stroke="#303030" stroke-width="1"/><ellipse cx="10" cy="4" rx="6" ry="2.6" fill="#b0b0c0" stroke="#303030" stroke-width="1"/><path d="M6,6 L9,17 M9,6 L7,12 L12,17 M13,6 L11,12 L14,17" stroke="#303030" stroke-width="0.8" fill="none"/></g></svg><svg class="a" style="left:100px;top:925px" width="80" height="80" viewBox="100 925 80 80">
<rect x="121" y="944" width="23" height="23" fill="#8a9a68" opacity="0.85"/>
<path d="M144,944 V967 H121" stroke="#f0f000" stroke-width="1.2" fill="none"/>
<line x1="131.5" y1="945" x2="131.5" y2="966" stroke="#e8e0a0" stroke-width="0.8"/>
<line x1="120" y1="945" x2="120" y2="984" stroke="#10c010" stroke-width="2.5"/>
<path d="M116,982 L124,982 L120,992Z" fill="#10a010"/>
<path d="M120,941 L140,941" stroke="#10a0a0" stroke-width="1.5"/>
<line x1="120" y1="942" x2="142" y2="942" stroke="#f01010" stroke-width="2.5"/>
<path d="M141,937 L150,942 L141,947Z" fill="#e01010"/>
<circle cx="119.5" cy="941.8" r="3.6" fill="#707070"/>
<path d="M146,937 C148,934 152,935 151,938 L146,941 H152" stroke="#00e8f0" stroke-width="1.5" fill="none"/>
<path d="M152,934 H158 L153,941" stroke="#f01010" stroke-width="1" fill="none"/>
<path d="M154,938 L161,946 M161,938 L154,946" stroke="#e0e0e0" stroke-width="0.8"/>
<path d="M116,994 L119.5,998 L123,994 M119.5,998 V1001" stroke="#f01010" stroke-width="1" fill="none"/>
</svg>
<svg class="a" style="left:195px;top:478px" width="80" height="100" viewBox="195 478 80 100">
<rect x="202.5" y="484.5" width="43" height="48" fill="#a0a0b0" fill-opacity="0.18" stroke="#d8d8d8" stroke-width="1" stroke-dasharray="3,3"/>
<line x1="224" y1="510" x2="224" y2="551" stroke="#10a020" stroke-width="2"/>
<path d="M220,549 L228,549 L224,558Z" fill="#108020"/>
<line x1="224" y1="507" x2="252" y2="507" stroke="#3060c0" stroke-width="2"/>
<line x1="224" y1="510" x2="250" y2="510" stroke="#e01050" stroke-width="2"/>
<circle cx="223.6" cy="508.5" r="3.5" fill="#606068"/>
<circle cx="253" cy="506" r="3.5" fill="#30a8e0"/>
<path d="M256,500 H263 L256,509 H263" stroke="#f01010" stroke-width="1" fill="none"/>
<path d="M259,505 L266,513 M266,505 L259,513" stroke="#e0e0e0" stroke-width="0.8"/>
<path d="M220,561 L223.5,566 L227,561 M223.5,566 V570" stroke="#f01010" stroke-width="1" fill="none"/>
</svg>
<svg class="a" style="left:886px;top:503px" width="56" height="42" viewBox="886 503 56 42">
<defs><linearGradient id="wmg" x1="0" x2="0" y1="0" y2="1"><stop offset="0" stop-color="#ee6a1e"/><stop offset="1" stop-color="#f8a01c"/></linearGradient>
<linearGradient id="wmc" x1="0" x2="1" y1="0" y2="1"><stop offset="0" stop-color="#f8b020"/><stop offset="1" stop-color="#ee7020"/></linearGradient></defs>
<g fill="url(#wmg)">
<path d="M891,517.5 L893.5,517 L893.5,536 L897,537 L891,537Z"/>
<path d="M894.6,512.5 L897,512 L898,514 L898,534 L905,537 L894.6,537Z"/>
<path d="M899,508 L901,508.5 L902.5,511 L902.5,532 L908,536.5 L899,535Z"/>
<path d="M936.3,517.5 L933.7,517 L933.7,536 L930,537 L936.3,537Z"/>
<path d="M932.6,512.5 L930,512 L929,514 L929,534 L922,537 L932.6,537Z"/>
<path d="M928,508 L926,508.5 L924.6,511 L924.6,532 L919,536.5 L928,535Z"/>
<rect x="891" y="537" width="45.3" height="3.2"/>
</g>
<path d="M914.5,510 C906,511 902,520 906,527 C905,522 908,518 912,517.5 L912,536 L914.5,535Z" fill="url(#wmc)"/>
<path d="M914.5,535 C921,534 925,527 920,519.5 C920,523 918,527 914.5,528Z" fill="url(#wmc)"/>
</svg>
<div class="t" style="left:946px;top:512px;font-size:17px;color:#f08a28;line-height:22px;letter-spacing:-0.4px">智造资料网</div>
<div class="t" style="left:946px;top:533px;font-size:5px;color:#e08a30;line-height:6px;font-weight:bold;letter-spacing:-0.35px">INTELLIGENT MANUFACTURING DATA</div>
<div class="a" style="left:1336px;top:1003px;width:5px;height:16px;background:repeating-linear-gradient(90deg,#b8bcc8 0 1px,transparent 1px 2px),repeating-linear-gradient(#d6dbe9 0 1px,transparent 1px 2px)"></div>
<div class="a" style="left:1341px;top:1002px;width:131px;height:18px;background:#fff"></div>
<div class="t" style="left:1486px;top:1005px;font-size:12px;color:#000;">绝对 XY 上视图</div>
<div class="a" style="left:1475px;top:1003px;width:5px;height:16px;background:repeating-linear-gradient(90deg,#b8bcc8 0 1px,transparent 1px 2px),repeating-linear-gradient(#d6dbe9 0 1px,transparent 1px 2px)"></div>
<svg class="a" style="left:1462px;top:1005px" width="12" height="12"><circle cx="6" cy="6" r="4" fill="none" stroke="#3a70c0" stroke-width="1.2"/></svg>
<div class="a" style="left:1592px;top:1004px;width:1px;height:14px;background:#a0a4b0"></div>
<div class="t" style="left:1601px;top:1004px;font-size:12px;color:#000;">绝对视图</div>
<div class="a" style="left:1658px;top:1003px;width:4px;height:16px;background:repeating-linear-gradient(#b8bcc8 0 1px,transparent 1px 2px)"></div>
<div class="t" style="left:1668px;top:1004px;font-size:12px;color:#000;font-weight:bold">LAYER0</div>
<div class="a" style="left:1726px;top:1004px;width:1px;height:14px;background:#a0a4b0"></div>
<div class="a" style="left:1757px;top:1004px;width:1px;height:14px;background:#a0a4b0"></div>
<div class="a" style="left:1800px;top:1004px;width:1px;height:14px;background:#a0a4b0"></div>
<div class="a" style="left:1843px;top:1004px;width:1px;height:14px;background:#a0a4b0"></div>
<div class="a" style="left:1886px;top:1004px;width:1px;height:14px;background:#a0a4b0"></div>
<div class="a" style="left:1762px;top:1005px;width:32px;height:12px;background:#4a6290"></div>
<div class="a" style="left:1805px;top:1005px;width:32px;height:12px;background:#4a6290"></div>
<div class="a" style="left:1848px;top:1005px;width:32px;height:12px;background:#4a6290"></div>
<svg class="a" style="left:1893px;top:1003px" width="15" height="15"><circle cx="7.5" cy="7.5" r="6.5" fill="#2050d0"/><path d="M3,4 C5,2 8,3 7,6 C6,8 9,9 8,12 C6,13 3,11 3,8Z M10,3 C12,4 13,7 12,8 C10,7 9,5 10,3Z" fill="#30b030"/><circle cx="5" cy="4" r="1.5" fill="#fff" opacity="0.6"/></svg>
<div class="a" style="left:1132px;top:1023px;width:1px;height:15px;background:#a0a4b0"></div>
<div class="a" style="left:1175px;top:1023px;width:1px;height:15px;background:#a0a4b0"></div>
<div class="a" style="left:1206px;top:1023px;width:1px;height:15px;background:#a0a4b0"></div>
<div class="a" style="left:1237px;top:1023px;width:1px;height:15px;background:#a0a4b0"></div>
<div class="a" style="left:1268px;top:1023px;width:1px;height:15px;background:#a0a4b0"></div>
<div class="a" style="left:1299px;top:1023px;width:1px;height:15px;background:#a0a4b0"></div>
<div class="a" style="left:1330px;top:1023px;width:1px;height:15px;background:#a0a4b0"></div>
<div class="a" style="left:1361px;top:1023px;width:1px;height:15px;background:#a0a4b0"></div>
<div class="a" style="left:1454px;top:1023px;width:1px;height:15px;background:#a0a4b0"></div>
<div class="a" style="left:1580px;top:1023px;width:1px;height:15px;background:#a0a4b0"></div>
<div class="a" style="left:1654px;top:1023px;width:1px;height:15px;background:#a0a4b0"></div>
<div class="t" style="left:1141px;top:1025px;font-size:12px;color:#000;">拴牢</div>
<svg class="a" style="left:1182px;top:1022px" width="17" height="17"><rect x="0.5" y="0.5" width="16" height="16" fill="#c8c8d4" stroke="#606070"/><path d="M4,8 A4.5,4.5 0 0 1 12,5" stroke="#e06080" stroke-width="2" fill="none"/><path d="M13,9 A4.5,4.5 0 0 1 5,12" stroke="#e06080" stroke-width="2" fill="none"/></svg>
<svg class="a" style="left:1212px;top:1021px" width="18" height="18"><rect x="0" y="0" width="18" height="18" fill="#f8d870"/><path d="M2,3 L8,1 L15,5 L12,12 L4,10Z" fill="#c060d0"/><path d="M6,6 L14,16 L11,17 L9,12Z" fill="#e8e8f0" stroke="#707070" stroke-width="0.6"/><circle cx="5" cy="4" r="2" fill="#f8f060"/></svg>
<svg class="a" style="left:1245px;top:1021px" width="16" height="17"><path d="M2,8 L8,2 L15,3 L9,9Z" fill="#e8a860" stroke="#a06020" stroke-width="0.6"/><rect x="2" y="8" width="10" height="8" fill="#e8f0ff" stroke="#404a60" stroke-width="0.8"/><circle cx="6" cy="12" r="1.5" fill="#3060d0"/><circle cx="9" cy="12" r="1.5" fill="#3060d0"/></svg>
<svg class="a" style="left:1276px;top:1021px" width="17" height="18"><ellipse cx="8.5" cy="16" rx="6" ry="1.6" fill="#000" opacity="0.3"/><path d="M4,5 C4,1 13,1 13,5 C13,8 9,8 9,11" stroke="#3a6ac8" stroke-width="2.6" fill="none"/><circle cx="9" cy="14" r="1.5" fill="#3a6ac8"/></svg>
<svg class="a" style="left:1305px;top:1021px" width="18" height="18"><path d="M2,3 L6,1 L10,3 L10,7 L6,9 L2,7Z" fill="#3a80e0" stroke="#204080" stroke-width="0.6"/><path d="M8,10 L12,8 L17,10 L17,15 L12,17 L8,15Z" fill="#90b0b0" stroke="#203040" stroke-width="0.7"/><path d="M1,13 H8 M5,10 L8,13 L5,16" stroke="#e01010" stroke-width="1.8" fill="none"/></svg>
<svg class="a" style="left:1336px;top:1021px" width="18" height="18"><rect x="0" y="0" width="18" height="18" fill="#f8d870"/><path d="M2,5 L9,2 L16,5 L9,8Z" fill="#e020e0"/><path d="M2,5 L9,8 L9,16 L2,13Z" fill="#90a8a0" stroke="#2050c0" stroke-width="0.8"/><path d="M9,8 L16,5 L16,13 L9,16Z" fill="#80a098" stroke="#2050c0" stroke-width="0.8"/></svg>
<svg class="a" style="left:1370px;top:1024px" width="14" height="14"><rect x="1" y="2" width="11" height="11" fill="none" stroke="#707070"/></svg>
<svg class="a" style="left:1399px;top:1022px" width="18" height="18"><circle cx="9" cy="9" r="7" fill="none" stroke="#20a020" stroke-width="2"/></svg>
<svg class="a" style="left:1430px;top:1024px" width="18" height="14"><rect x="1" y="1" width="7" height="12" fill="none" stroke="#707070"/><rect x="9" y="1" width="7" height="12" fill="none" stroke="#707070"/></svg>
<div class="t" style="left:1463px;top:1025px;font-size:12px;color:#000;">L3: 1.00 P3: 1.00</div>
<div class="t" style="left:1589px;top:1025px;font-size:12px;color:#000;">单位: 毫米</div>
<div class="t" style="left:1663px;top:1025px;font-size:12.8px;color:#000;">X = 0421.747</div>
<div class="t" style="left:1744px;top:1025px;font-size:12.8px;color:#f01010;">Y =-0134.647</div>
<div class="t" style="left:1824px;top:1025px;font-size:12.8px;color:#000;">Z = 1420.000</div>
<div class="a" style="left:1379px;top:1009px;width:187px;height:24px;background:#fff;border:1px solid #c8c8c8"></div>
<svg class="a" style="left:1357px;top:1004px" width="32" height="32"><rect x="4" y="4" width="25" height="24" rx="5" transform="rotate(-14 16 16)" fill="#f05a22"/><path d="M22,10 C18,7 10,8 11,13 C12,17 21,15 21,20 C21,24 12,25 9,21" stroke="#fff" stroke-width="3.5" fill="none" stroke-linecap="round"/></svg>
<div class="t" style="left:1392px;top:1013px;font-size:14px;color:#2a78d0;font-weight:bold;line-height:16px">中</div>
<svg class="a" style="left:1413px;top:1012px" width="18" height="18"><circle cx="4" cy="6" r="2" fill="none" stroke="#2a78d0" stroke-width="1.2"/><path d="M11,9 C12,10 12,13 9,15" stroke="#2a78d0" stroke-width="2.2" fill="none"/></svg>
<svg class="a" style="left:1435px;top:1012px" width="18" height="18"><circle cx="9" cy="9" r="7" fill="none" stroke="#2a78d0" stroke-width="1.8"/><circle cx="6.5" cy="7" r="1" fill="#2a78d0"/><circle cx="11.5" cy="7" r="1" fill="#2a78d0"/><path d="M5.5,10.5 Q9,14 12.5,10.5" stroke="#2a78d0" stroke-width="1.4" fill="none"/></svg>
<svg class="a" style="left:1459px;top:1011px" width="14" height="20"><rect x="4" y="1" width="6" height="11" rx="3" fill="#2a78d0"/><path d="M2,8 C2,15 12,15 12,8 M7,14 V18 M4,18 H10" stroke="#2a78d0" stroke-width="1.6" fill="none"/></svg>
<svg class="a" style="left:1479px;top:1014px" width="18" height="14"><rect x="1" y="1" width="16" height="11" rx="1" fill="#2a78d0"/><g fill="#fff"><rect x="3" y="3" width="2" height="2"/><rect x="6" y="3" width="2" height="2"/><rect x="9" y="3" width="2" height="2"/><rect x="12" y="3" width="2" height="2"/><rect x="3" y="6" width="2" height="2"/><rect x="6" y="6" width="2" height="2"/><rect x="9" y="6" width="2" height="2"/><rect x="12" y="6" width="2" height="2"/><rect x="5" y="9" width="8" height="1.5"/></g></svg>
<svg class="a" style="left:1502px;top:1012px" width="18" height="18"><circle cx="8" cy="5" r="3.5" fill="#c8ccd4"/><path d="M1,16 C1,9 15,9 15,16Z" fill="#c8ccd4"/><circle cx="14" cy="14" r="3.5" fill="#fff" stroke="#c8ccd4"/></svg>
<svg class="a" style="left:1524px;top:1012px" width="18" height="18"><path d="M5,2 L2,4 L0,8 L3,9 L4,8 V16 H13 V8 L14,9 L17,8 L15,4 L12,2 C11,4 6,4 5,2Z" fill="#2a78d0"/></svg>
<svg class="a" style="left:1546px;top:1013px" width="16" height="16"><g fill="#2a78d0"><rect x="1" y="1" width="6" height="6"/><rect x="1" y="9" width="6" height="6"/><rect x="9" y="9" width="6" height="6"/><rect x="9" y="1" width="6" height="6" fill="none" stroke="#2a78d0" stroke-width="1.5"/></g></svg>
<div class="t" style="left:1815px;top:1043px;font-size:12px;color:#fff;line-height:14px">15:18</div>
<div class="a" style="left:1915px;top:1040px;width:1px;height:8px;background:#606060"></div></body></html>
